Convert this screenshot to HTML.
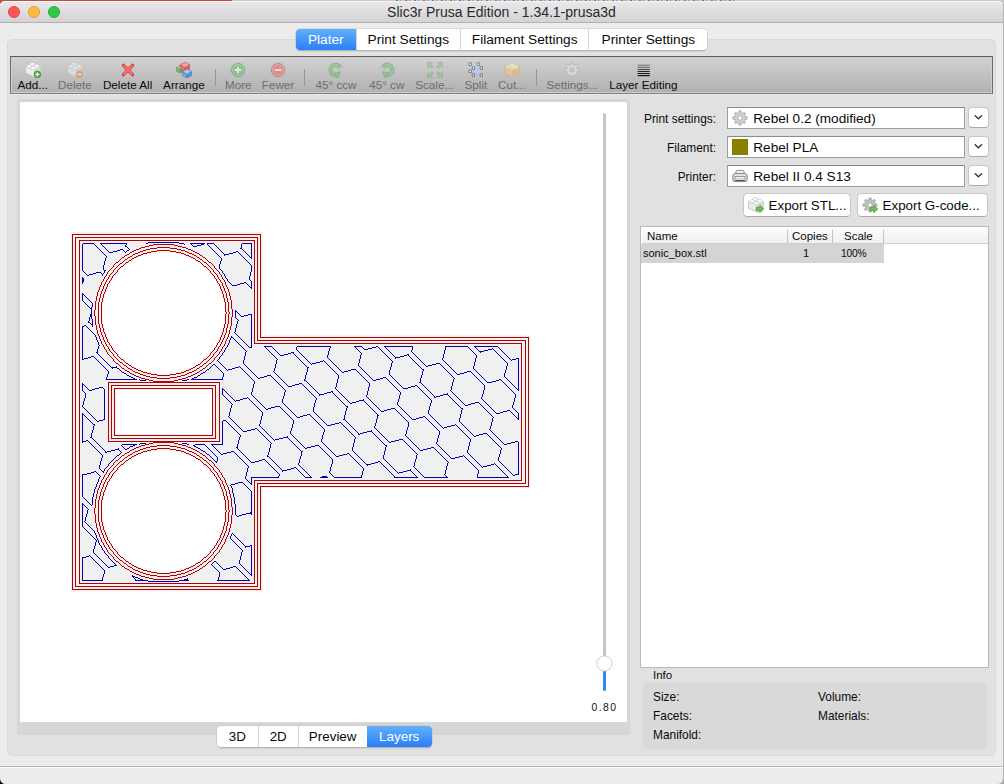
<!DOCTYPE html>
<html><head><meta charset="utf-8"><title>Slic3r Prusa Edition</title>
<style>
*{box-sizing:border-box;margin:0;padding:0}
html,body{width:1004px;height:784px;overflow:hidden;background:#b2b2b2;font-family:"Liberation Sans",sans-serif;font-size:13px;color:#222}
.abs{position:absolute}
#bg{position:absolute;left:0;top:0;width:1004px;height:6px;background:#c9c9c9}
#bgred{position:absolute;left:0;top:0;width:232px;height:6px;background:#b5553f}
#bgtxt{position:absolute;left:396px;top:0;width:340px;height:1px;background:repeating-linear-gradient(90deg,#6a6a6a 0 2px,#c9c9c9 2px 4px,#888 4px 5px,#c9c9c9 5px 9px);opacity:.8}
#win{position:absolute;left:0;top:0;width:1004px;height:784px;overflow:hidden}
#winbg{position:absolute;left:0;top:1px;width:1003px;height:783px;background:#ececec;border-radius:5px 5px 4px 4px}
#title{position:absolute;left:0;top:1px;width:1003px;height:22px;border-radius:5px 5px 0 0;background:linear-gradient(#eae8ea,#d4d2d4);border-bottom:1px solid #b3b1b3;box-shadow:inset 0 1px 0 #f5f4f5;text-align:center;line-height:23px;font-size:14px;color:#2a2a2a}
.tl{position:absolute;top:5px;width:12px;height:12px;border-radius:50%}
#tabbox{position:absolute;left:7px;top:39px;width:989px;height:716.5px;background:#e1e1e1;border:1px solid #dadada;border-radius:5px}
#tabs{position:absolute;left:296px;top:28.5px;height:21px;width:411.3px;border-radius:4px;background:#fff;box-shadow:0 0 0 0.5px #c4c4c4,0 1px 0.5px 0.2px #a8a8a8;overflow:hidden;font-size:13.7px}
#tabs div{position:absolute;top:0;height:21px;line-height:21px;text-align:center;color:#0a0a0a;border-left:1px solid #d6d6d6}
#tabs div.sel{background:linear-gradient(#62b0fa,#2a7ff6);color:#fff;border-left:none}
#toolbar{position:absolute;left:10px;top:56px;width:983px;height:38px;background:linear-gradient(#d2d2d2,#b0b0b0);border:1px solid #6e6e6e;border-top-color:#5c5c5c;border-bottom-color:#808080;box-shadow:inset 0 0 0 1px #cdcdcd,0 1px 0 #e9e9e9}
.tb{position:absolute;top:21px;font-size:11.7px;color:#0a0a0a;white-space:nowrap;transform:translateX(-50%)}
.tb.dis{color:#6e6e6e}
.sep{position:absolute;top:11.5px;width:1px;height:17px;background:#969696}
#panel{position:absolute;left:17px;top:99px;width:613px;height:636px;background:#d6d6d6;border-radius:4px}
#canvas{position:absolute;left:20px;top:102px;width:607px;height:620px;overflow:hidden;background:#fff}
#btabs{position:absolute;left:216.8px;top:726.3px;width:214.8px;height:20.4px;border-radius:4px;background:#fff;box-shadow:0 0 0 0.5px #c4c4c4,0 1px 0.5px 0.2px #a8a8a8;overflow:hidden;font-size:13.4px}
#btabs div{position:absolute;top:0;height:20.4px;line-height:21px;text-align:center;color:#0a0a0a;border-left:1px solid #d6d6d6}
#btabs div.sel{background:linear-gradient(#62b0fa,#2a7ff6);color:#fff;border-left:none}
.lbl{position:absolute;font-size:11.9px;color:#0a0a0a;white-space:nowrap}
.combo{position:absolute;left:727px;width:238px;height:22px;background:#fff;border:1px solid #9c9c9c;border-top-color:#8a8a8a;font-size:13.6px;line-height:21.6px;color:#0a0a0a;padding-left:25.3px;white-space:nowrap}
.cbtn{position:absolute;left:968.3px;width:20.4px;height:20.4px;background:#fff;border:1px solid #c6c6c6;border-bottom-color:#aaa;border-radius:4px}
.btn{position:absolute;top:192.5px;height:24px;background:#fff;border:1px solid #c6c6c6;border-bottom-color:#aaa;border-radius:4.5px;font-size:13.35px;line-height:23px;color:#0a0a0a;white-space:nowrap;padding-left:25px}
#list{position:absolute;left:640px;top:226px;width:349px;height:442px;background:#fff;border:1px solid #b8b8b8}
#status{position:absolute;left:0;top:766px;width:1004px;height:18px;background:#ececec;border-top:1px solid #b4b4b4;box-shadow:inset 0 1px 0 #fbfbfb}

.ic{position:absolute;top:5px;width:16px;height:16px}
.cic{position:absolute;left:3.5px;top:2px;width:16px;height:16px}
.bic{position:absolute;left:4px;top:3px;width:16px;height:16px}
#lhead{position:absolute;left:1px;top:1px;width:346px;height:16px;background:linear-gradient(#fcfcfc,#f0f0f0);border-bottom:1px solid #cfcfcf}
.lh{position:absolute;top:2.5px;font-size:11.5px;color:#0a0a0a}
.lsep{position:absolute;top:3px;width:1px;height:13px;background:#c4c4c4}
#lrow{position:absolute;left:0;top:17px;width:243px;height:19px;background:#d4d4d4}
.lr{position:absolute;top:20px;font-size:11px;color:#0a0a0a;white-space:nowrap}
#info{position:absolute;left:643px;top:682px;width:344px;height:67px;background:#d9d9d9;border-radius:4px}
#redge{position:absolute;left:1003px;top:4px;width:1px;height:776px;background:#b2b2b2}
</style></head><body>
<div id="bg"></div><div id="bgred"></div><div id="bgtxt"></div>
<div id="win">
<div id="winbg"></div>
<div id="title">Slic3r Prusa Edition - 1.34.1-prusa3d
 <div class="tl" style="left:8px;background:#fc5753;border:1px solid #df4744"></div>
 <div class="tl" style="left:28px;background:#fdbc40;border:1px solid #de9f34"></div>
 <div class="tl" style="left:48px;background:#33c748;border:1px solid #27aa35"></div>
</div>
<div id="tabbox"></div>
<div id="tabs">
 <div class="sel" style="left:0;width:59.6px">Plater</div>
 <div style="left:59.6px;width:104.4px">Print Settings</div>
 <div style="left:164px;width:128.4px">Filament Settings</div>
 <div style="left:292.4px;width:119px">Printer Settings</div>
</div>
<div id="toolbar">
<div class="tb" style="left:21.8px">Add...</div>
<div class="ic" style="left:13.8px"><svg width="16" height="16" viewBox="0 0 16 16"><path d="M0.4,4.8 L7,1.6 L15.7,4.6 L15.7,10.6 L9.5,15.4 L0.5,11.2Z" fill="#ececec" stroke="#b4b4b4" stroke-width="0.8" stroke-linejoin="round"/>
<path d="M0.4,4.8 L7,1.6 L15.7,4.6 L9.5,8.6Z" fill="#f8f8f8"/>
<path d="M9.5,8.6 L15.7,4.6 L15.7,10.6 L9.5,15.4Z" fill="#d8d8d8"/>
<path d="M0.4,4.8 L9.5,8.6 L15.7,4.6 M9.5,8.6V15.4" fill="none" stroke="#c8c8c8" stroke-width="0.5"/>
<g fill="#fdfdfd" stroke="#c0c0c0" stroke-width="0.6"><path d="M5.2,1.6 a2.1,1.2 0 0 1 4.2,0 v1 a2.1,1.2 0 0 1 -4.2,0z"/><path d="M2.2,3.8 a2.1,1.2 0 0 1 4.2,0 v1 a2.1,1.2 0 0 1 -4.2,0z"/><path d="M9.4,3.4 a2.1,1.2 0 0 1 4.2,0 v1 a2.1,1.2 0 0 1 -4.2,0z"/><path d="M6.2,5.6 a2.1,1.2 0 0 1 4.2,0 v1 a2.1,1.2 0 0 1 -4.2,0z"/></g><circle cx="12.4" cy="12.4" r="3.4" fill="#4caf3a" stroke="#2f8f22" stroke-width="0.6"/><path d="M10.4,12.4h4M12.4,10.4v4" stroke="#fff" stroke-width="1.3"/></svg></div>
<div class="tb dis" style="left:63.9px">Delete</div>
<div class="ic" style="left:55.9px"><svg width="16" height="16" viewBox="0 0 16 16" opacity="0.55"><path d="M0.4,4.8 L7,1.6 L15.7,4.6 L15.7,10.6 L9.5,15.4 L0.5,11.2Z" fill="#ececec" stroke="#b4b4b4" stroke-width="0.8" stroke-linejoin="round"/>
<path d="M0.4,4.8 L7,1.6 L15.7,4.6 L9.5,8.6Z" fill="#f8f8f8"/>
<path d="M9.5,8.6 L15.7,4.6 L15.7,10.6 L9.5,15.4Z" fill="#d8d8d8"/>
<path d="M0.4,4.8 L9.5,8.6 L15.7,4.6 M9.5,8.6V15.4" fill="none" stroke="#c8c8c8" stroke-width="0.5"/>
<g fill="#fdfdfd" stroke="#c0c0c0" stroke-width="0.6"><path d="M5.2,1.6 a2.1,1.2 0 0 1 4.2,0 v1 a2.1,1.2 0 0 1 -4.2,0z"/><path d="M2.2,3.8 a2.1,1.2 0 0 1 4.2,0 v1 a2.1,1.2 0 0 1 -4.2,0z"/><path d="M9.4,3.4 a2.1,1.2 0 0 1 4.2,0 v1 a2.1,1.2 0 0 1 -4.2,0z"/><path d="M6.2,5.6 a2.1,1.2 0 0 1 4.2,0 v1 a2.1,1.2 0 0 1 -4.2,0z"/></g><circle cx="12.4" cy="12.4" r="3.4" fill="#f09050" stroke="#d87030" stroke-width="0.6"/><path d="M10.4,12.4h4" stroke="#fff" stroke-width="1.3"/></svg></div>
<div class="tb" style="left:116.6px">Delete All</div>
<div class="ic" style="left:108.6px"><svg width="16" height="16" viewBox="0 0 16 16"><path d="M3.4,3.4 L12.6,12.6 M12.6,3.4 L3.4,12.6" stroke="#e8383d" stroke-width="3.4" stroke-linecap="round"/><path d="M3.8,3.8 L12.2,12.2 M12.2,3.8 L3.8,12.2" stroke="#f8787a" stroke-width="1.7" stroke-linecap="round"/></svg></div>
<div class="tb" style="left:172.9px">Arrange</div>
<div class="ic" style="left:164.9px"><svg width="16" height="16" viewBox="0 0 16 16"><path d="M0.30,5.67 L4.00,7.74 L4.00,11.00 L0.30,8.93Z" fill="#7cc474" stroke="#4e9a48" stroke-width="0.6" stroke-linejoin="round"/><path d="M4.00,7.74 L7.70,5.67 L7.70,8.93 L4.00,11.00Z" fill="#62b45a" stroke="#4e9a48" stroke-width="0.6" stroke-linejoin="round"/><path d="M0.30,5.67 L4.00,3.60 L7.70,5.67 L4.00,7.74Z" fill="#a8dca0" stroke="#4e9a48" stroke-width="0.6" stroke-linejoin="round"/><path d="M4.20,2.93 L8.90,5.56 L8.90,9.70 L4.20,7.07Z" fill="#ee7474" stroke="#c84848" stroke-width="0.6" stroke-linejoin="round"/><path d="M8.90,5.56 L13.60,2.93 L13.60,7.07 L8.90,9.70Z" fill="#e45c5c" stroke="#c84848" stroke-width="0.6" stroke-linejoin="round"/><path d="M4.20,2.93 L8.90,0.30 L13.60,2.93 L8.90,5.56Z" fill="#f8a4a4" stroke="#c84848" stroke-width="0.6" stroke-linejoin="round"/><path d="M6.40,9.58 L11.00,12.15 L11.00,16.20 L6.40,13.62Z" fill="#74a8e4" stroke="#4a7cc0" stroke-width="0.6" stroke-linejoin="round"/><path d="M11.00,12.15 L15.60,9.58 L15.60,13.62 L11.00,16.20Z" fill="#5c94d8" stroke="#4a7cc0" stroke-width="0.6" stroke-linejoin="round"/><path d="M6.40,9.58 L11.00,7.00 L15.60,9.58 L11.00,12.15Z" fill="#a4c8f0" stroke="#4a7cc0" stroke-width="0.6" stroke-linejoin="round"/></svg></div>
<div class="tb dis" style="left:227.3px">More</div>
<div class="ic" style="left:219.3px"><svg width="16" height="16" viewBox="0 0 16 16" opacity="0.55"><circle cx="8" cy="8" r="6.7" fill="#5cb85c" stroke="#3c9a3c" stroke-width="0.8"/><circle cx="8" cy="8" r="5.4" fill="none" stroke="#a8dca8" stroke-width="0.7"/><path d="M4.8,8h6.4M8,4.8v6.4" stroke="#fff" stroke-width="1.9"/></svg></div>
<div class="tb dis" style="left:267.0px">Fewer</div>
<div class="ic" style="left:259.0px"><svg width="16" height="16" viewBox="0 0 16 16" opacity="0.55"><circle cx="8" cy="8" r="6.7" fill="#e8645a" stroke="#c8483e" stroke-width="0.8"/><circle cx="8" cy="8" r="5.4" fill="none" stroke="#f4b0a8" stroke-width="0.7"/><path d="M4.8,8h6.4" stroke="#fff" stroke-width="1.9"/></svg></div>
<div class="tb dis" style="left:325.0px">45° ccw</div>
<div class="ic" style="left:317.0px"><svg width="16" height="16" viewBox="0 0 16 16" opacity="0.50"><g transform="translate(-0.5,0.5)"><path d="M12.6,5.2 A5,5 0 1,0 8.8,12.4" fill="none" stroke="#3c9a3c" stroke-width="4.2"/><path d="M12.6,5.2 A5,5 0 1,0 8.8,12.4" fill="none" stroke="#6cc46c" stroke-width="3"/><path d="M8.4,8.6 L13.4,12 L8.4,15.6Z" fill="#6cc46c" stroke="#3c9a3c" stroke-width="0.7" stroke-linejoin="round" transform="rotate(200 10 12)"/></g></svg></div>
<div class="tb dis" style="left:375.8px">45° cw</div>
<div class="ic" style="left:367.8px"><svg width="16" height="16" viewBox="0 0 16 16" opacity="0.50"><g transform="translate(16.5,0.5) scale(-1,1)"><path d="M12.6,5.2 A5,5 0 1,0 8.8,12.4" fill="none" stroke="#3c9a3c" stroke-width="4.2"/><path d="M12.6,5.2 A5,5 0 1,0 8.8,12.4" fill="none" stroke="#6cc46c" stroke-width="3"/><path d="M8.4,8.6 L13.4,12 L8.4,15.6Z" fill="#6cc46c" stroke="#3c9a3c" stroke-width="0.7" stroke-linejoin="round" transform="rotate(200 10 12)"/></g></svg></div>
<div class="tb dis" style="left:423.7px">Scale...</div>
<div class="ic" style="left:415.7px"><svg width="16" height="16" viewBox="0 0 16 16" opacity="0.42"><path d="M0.6,0.6h5l-1.6,1.6l2.4,2.4l-1.8,1.8l-2.4,-2.4l-1.6,1.6z" fill="#6cc46c" stroke="#3c9a3c" stroke-width="0.6" stroke-linejoin="round"/><g transform="translate(16,0) scale(-1,1)"><path d="M0.6,0.6h5l-1.6,1.6l2.4,2.4l-1.8,1.8l-2.4,-2.4l-1.6,1.6z" fill="#6cc46c" stroke="#3c9a3c" stroke-width="0.6" stroke-linejoin="round"/></g><g transform="translate(0,16) scale(1,-1)"><path d="M0.6,0.6h5l-1.6,1.6l2.4,2.4l-1.8,1.8l-2.4,-2.4l-1.6,1.6z" fill="#6cc46c" stroke="#3c9a3c" stroke-width="0.6" stroke-linejoin="round"/></g><g transform="translate(16,16) scale(-1,-1)"><path d="M0.6,0.6h5l-1.6,1.6l2.4,2.4l-1.8,1.8l-2.4,-2.4l-1.6,1.6z" fill="#6cc46c" stroke="#3c9a3c" stroke-width="0.6" stroke-linejoin="round"/></g></svg></div>
<div class="tb dis" style="left:464.9px">Split</div>
<div class="ic" style="left:456.9px"><svg width="16" height="16" viewBox="0 0 16 16" opacity="0.80"><rect x="2.2" y="2.2" width="8" height="7" fill="#c4d8f4" stroke="#a8c4ec" stroke-width="0.6"/><rect x="5.4" y="6" width="8" height="7" fill="#b4ccf0" stroke="#98b8e8" stroke-width="0.6"/><rect x="1.0" y="1.0" width="2.4" height="2.4" fill="#fff" stroke="#555" stroke-width="0.8"/><rect x="9.0" y="1.0" width="2.4" height="2.4" fill="#fff" stroke="#555" stroke-width="0.8"/><rect x="1.0" y="8.0" width="2.4" height="2.4" fill="#fff" stroke="#555" stroke-width="0.8"/><rect x="4.2" y="4.8" width="2.4" height="2.4" fill="#fff" stroke="#555" stroke-width="0.8"/><rect x="12.2" y="4.8" width="2.4" height="2.4" fill="#fff" stroke="#555" stroke-width="0.8"/><rect x="4.2" y="11.8" width="2.4" height="2.4" fill="#fff" stroke="#555" stroke-width="0.8"/><rect x="12.2" y="11.8" width="2.4" height="2.4" fill="#fff" stroke="#555" stroke-width="0.8"/></svg></div>
<div class="tb dis" style="left:501.0px">Cut...</div>
<div class="ic" style="left:493.0px"><svg width="16" height="16" viewBox="0 0 16 16" opacity="0.60"><path d="M8,0.8 L15.2,4.4 L15.2,11.6 L8,15.2 L0.8,11.6 L0.8,4.4Z" fill="#ecc880" stroke="#d8a850" stroke-width="0.8" stroke-linejoin="round"/><path d="M8,0.8 L15.2,4.4 L8,8 L0.8,4.4Z" fill="#f8e4b4"/><path d="M8,8 L15.2,4.4 L15.2,11.6 L8,15.2Z" fill="#e4b868"/><path d="M5.6,2 L12.6,5.6 L12.6,8" fill="none" stroke="#fff4d8" stroke-width="1.2"/></svg></div>
<div class="tb dis" style="left:561.4px">Settings...</div>
<div class="ic" style="left:553.4px"><svg width="16" height="16" viewBox="0 0 16 16" opacity="0.90"><path d="M15.11,6.87 L15.11,9.13 L13.06,9.21 L12.43,10.72 L13.82,12.23 L12.23,13.82 L10.72,12.43 L9.21,13.06 L9.13,15.11 L6.87,15.11 L6.79,13.06 L5.28,12.43 L3.77,13.82 L2.18,12.23 L3.57,10.72 L2.94,9.21 L0.89,9.13 L0.89,6.87 L2.94,6.79 L3.57,5.28 L2.18,3.77 L3.77,2.18 L5.28,3.57 L6.79,2.94 L6.87,0.89 L9.13,0.89 L9.21,2.94 L10.72,3.57 L12.23,2.18 L13.82,3.77 L12.43,5.28 L13.06,6.79Z M5.80,8.00 a2.20,2.20 0 1,0 4.40,0 a2.20,2.20 0 1,0 -4.40,0Z" fill="#dadada" stroke="#adadad" stroke-width="0.6" fill-rule="evenodd" stroke-linejoin="round"/></svg></div>
<div class="tb" style="left:632.4px">Layer Editing</div>
<div class="ic" style="left:624.4px"><svg width="16" height="16" viewBox="0 0 16 16"><g stroke="#111"><path d="M2.6,3.2h12.2" stroke-width="0.6" opacity="0.75"/><path d="M2.6,5.3h12.2" stroke-width="0.7" opacity="0.8"/><path d="M2.6,7.5h12.2" stroke-width="0.8" opacity="0.9"/><path d="M2.6,9.5h12.2" stroke-width="0.9"/><path d="M2.6,11.5h12.2" stroke-width="1"/><path d="M2.6,13.6h12.2" stroke-width="1.15"/></g></svg></div>
<div class="sep" style="left:204px"></div>
<div class="sep" style="left:293px"></div>
<div class="sep" style="left:525px"></div>
</div>
<div id="panel"></div>
<div id="canvas"><svg width="608" height="620" viewBox="0 0 608 620" style="position:absolute;left:0;top:0">
<path fill="#f0f0f0" d="M51.00,130.00 L243.00,130.00 L243.00,233.60 L509.70,233.60 L509.70,386.20 L243.00,386.20 L243.00,489.60 L51.00,489.60Z"/>
<circle cx="143.75" cy="211.00" r="60.8" fill="#fff"/>
<circle cx="143.75" cy="409.00" r="60.8" fill="#fff"/>
<rect x="96.00" y="287.80" width="96.00" height="44.40" fill="#fff"/>
<path shape-rendering="crispEdges" fill="#0000b3" d="M62,142v27h1v-27zM62,175v1h1v-1zM62,180v2h1v-2zM62,191v1h1v-1zM62,193v6h1v-6zM62,225v32h1v-32zM62,281v1h1v-1zM62,283v6h1v-6zM62,303v2h1v-2zM62,311v1h1v-1zM62,313v26h1v-26zM62,340v1h1v-1zM62,373v22h1v-22zM62,401v1h1v-1zM62,403v22h1v-22zM62,456v22h1v-22zM63,169v1h1v-1zM63,199v1h1v-1zM63,289v1h1v-1zM63,299v4h1v-4zM63,305v1h1v-1zM63,395v1h1v-1zM63,425v1h1v-1zM64,170v1h1v-1zM64,193v1h1v-1zM64,200v1h1v-1zM64,283v1h1v-1zM64,290v1h1v-1zM64,296v3h1v-3zM64,306v1h1v-1zM64,313v1h1v-1zM64,396v1h1v-1zM64,403v1h1v-1zM64,419v1h1v-1zM64,426v1h1v-1zM65,171v1h1v-1zM65,194v1h1v-1zM65,201v1h1v-1zM65,284v1h1v-1zM65,291v5h1v-5zM65,307v1h1v-1zM65,314v1h1v-1zM65,397v1h1v-1zM65,404v1h1v-1zM65,415v4h1v-4zM65,420v1h1v-1zM65,427v1h1v-1zM66,172v1h1v-1zM66,195v1h1v-1zM66,202v1h1v-1zM66,224v1h1v-1zM66,285v1h1v-1zM66,308v1h1v-1zM66,315v1h1v-1zM66,398v1h1v-1zM66,405v1h1v-1zM66,412v3h1v-3zM66,421v1h1v-1zM66,428v1h1v-1zM67,196v1h1v-1zM67,203v1h1v-1zM67,225v1h1v-1zM67,286v1h1v-1zM67,309v1h1v-1zM67,316v1h1v-1zM67,399v1h1v-1zM67,406v1h1v-1zM67,408v4h1v-4zM67,422v1h1v-1zM67,429v1h1v-1zM68,197v1h1v-1zM68,204v1h1v-1zM68,219v1h1v-1zM68,226v1h1v-1zM68,287v1h1v-1zM68,310v1h1v-1zM68,317v1h1v-1zM68,339v1h1v-1zM68,400v1h1v-1zM68,407v1h1v-1zM68,423v1h1v-1zM68,430v1h1v-1zM69,198v1h1v-1zM69,205v1h1v-1zM69,215v4h1v-4zM69,227v1h1v-1zM69,311v1h1v-1zM69,318v1h1v-1zM69,340v1h1v-1zM69,401v1h1v-1zM69,424v1h1v-1zM69,431v1h1v-1zM69,453v1h1v-1zM70,199v1h1v-1zM70,221v1h1v-1zM70,228v1h1v-1zM70,312v1h1v-1zM70,319v1h1v-1zM70,341v1h1v-1zM70,402v1h1v-1zM70,425v1h1v-1zM70,432v1h1v-1zM70,454v1h1v-1zM71,200v1h1v-1zM71,205v1h1v-1zM71,207v5h1v-5zM71,215v2h1v-2zM71,229v1h1v-1zM71,313v1h1v-1zM71,320v1h1v-1zM71,331v4h1v-4zM71,342v1h1v-1zM71,403v1h1v-1zM71,426v1h1v-1zM71,433v1h1v-1zM71,455v1h1v-1zM72,201v4h1v-4zM72,217v5h1v-5zM72,223v2h1v-2zM72,230v1h1v-1zM72,314v1h1v-1zM72,321v1h1v-1zM72,328v3h1v-3zM72,336v1h1v-1zM72,343v1h1v-1zM72,395v8h1v-8zM72,427v1h1v-1zM72,434v1h1v-1zM72,456v1h1v-1zM73,231v1h1v-1zM73,315v1h1v-1zM73,324v4h1v-4zM73,337v1h1v-1zM73,344v1h1v-1zM73,391v4h1v-4zM73,428v1h1v-1zM73,435v1h1v-1zM73,447v4h1v-4zM73,457v1h1v-1zM74,142v1h1v-1zM74,232v1h1v-1zM74,255v1h1v-1zM74,316v1h1v-1zM74,323v1h1v-1zM74,338v1h1v-1zM74,345v1h1v-1zM74,387v4h1v-4zM74,429v2h1v-2zM74,436v1h1v-1zM74,444v3h1v-3zM74,451v1h1v-1zM74,458v1h1v-1zM75,143v1h1v-1zM75,233v2h1v-2zM75,256v1h1v-1zM75,317v1h1v-1zM75,339v1h1v-1zM75,346v1h1v-1zM75,385v2h1v-2zM75,431v2h1v-2zM75,437v1h1v-1zM75,440v4h1v-4zM75,452v1h1v-1zM75,459v1h1v-1zM76,144v1h1v-1zM76,235v3h1v-3zM76,257v1h1v-1zM76,318v1h1v-1zM76,340v1h1v-1zM76,347v1h1v-1zM76,370v1h1v-1zM76,382v3h1v-3zM76,433v3h1v-3zM76,438v2h1v-2zM76,453v1h1v-1zM76,460v1h1v-1zM77,145v1h1v-1zM77,238v2h1v-2zM77,247v3h1v-3zM77,251v1h1v-1zM77,258v1h1v-1zM77,341v1h1v-1zM77,348v1h1v-1zM77,371v1h1v-1zM77,380v2h1v-2zM77,436v2h1v-2zM77,454v1h1v-1zM77,461v1h1v-1zM78,146v1h1v-1zM78,240v3h1v-3zM78,244v3h1v-3zM78,252v1h1v-1zM78,259v1h1v-1zM78,342v1h1v-1zM78,349v1h1v-1zM78,372v1h1v-1zM78,377v3h1v-3zM78,438v3h1v-3zM78,455v1h1v-1zM78,462v1h1v-1zM79,147v1h1v-1zM79,243v1h1v-1zM79,253v1h1v-1zM79,260v1h1v-1zM79,343v1h1v-1zM79,350v1h1v-1zM79,363v4h1v-4zM79,373v1h1v-1zM79,375v2h1v-2zM79,441v2h1v-2zM79,456v1h1v-1zM79,463v1h1v-1zM80,148v1h1v-1zM80,254v1h1v-1zM80,261v1h1v-1zM80,344v1h1v-1zM80,351v1h1v-1zM80,359v4h1v-4zM80,367v1h1v-1zM80,374v1h1v-1zM80,443v1h1v-1zM80,457v1h1v-1zM80,464v1h1v-1zM81,142v1h1v-1zM81,149v1h1v-1zM81,171v1h1v-1zM81,255v1h1v-1zM81,262v1h1v-1zM81,345v1h1v-1zM81,352v1h1v-1zM81,356v3h1v-3zM81,368v1h1v-1zM81,444v2h1v-2zM81,458v1h1v-1zM81,465v1h1v-1zM82,143v1h1v-1zM82,150v1h1v-1zM82,172v2h1v-2zM82,256v1h1v-1zM82,263v1h1v-1zM82,346v1h1v-1zM82,353v3h1v-3zM82,446v2h1v-2zM82,459v1h1v-1zM82,466v1h1v-1zM82,475v3h1v-3zM83,144v1h1v-1zM83,151v1h1v-1zM83,163v5h1v-5zM83,171v1h1v-1zM83,257v1h1v-1zM83,264v1h1v-1zM83,286v1h1v-1zM83,347v1h1v-1zM83,370v1h1v-1zM83,448v1h1v-1zM83,460v1h1v-1zM83,467v1h1v-1zM83,472v3h1v-3zM84,145v1h1v-1zM84,152v1h1v-1zM84,159v4h1v-4zM84,169v2h1v-2zM84,258v1h1v-1zM84,265v1h1v-1zM84,287v30h1v-30zM84,348v1h1v-1zM84,367v2h1v-2zM84,449v2h1v-2zM84,461v1h1v-1zM84,468v4h1v-4zM85,146v1h1v-1zM85,153v1h1v-1zM85,156v3h1v-3zM85,259v1h1v-1zM85,266v1h1v-1zM85,349v1h1v-1zM85,366v1h1v-1zM85,451v1h1v-1zM85,462v1h1v-1zM86,147v1h1v-1zM86,154v2h1v-2zM86,260v1h1v-1zM86,267v1h1v-1zM86,275v2h1v-2zM86,365v1h1v-1zM86,452v1h1v-1zM86,463v1h1v-1zM87,148v1h1v-1zM87,261v1h1v-1zM87,268v1h1v-1zM87,272v3h1v-3zM87,364v1h1v-1zM87,453v1h1v-1zM87,464v1h1v-1zM88,149v1h1v-1zM88,262v1h1v-1zM88,269v3h1v-3zM88,362v2h1v-2zM88,454v2h1v-2zM89,263v1h1v-1zM89,361v1h1v-1zM89,456v1h1v-1zM90,264v1h1v-1zM90,360v1h1v-1zM90,457v1h1v-1zM91,359v1h1v-1zM91,458v1h1v-1zM92,266v1h1v-1zM92,358v1h1v-1zM92,459v1h1v-1zM93,357v1h1v-1zM93,460v1h1v-1zM94,356v1h1v-1zM94,461v1h1v-1zM95,355v1h1v-1zM95,462v1h1v-1zM96,264v1h1v-1zM96,354v1h1v-1zM98,346v1h1v-1zM99,267v1h1v-1zM99,348v1h1v-1zM99,352v1h1v-1zM100,268v1h1v-1zM100,349v1h1v-1zM100,351v1h1v-1zM101,269v1h1v-1zM101,343v1h1v-1zM101,350v1h1v-1zM102,344v1h1v-1zM103,148v1h1v-1zM103,345v1h1v-1zM104,149v1h1v-1zM104,346v1h1v-1zM105,143v1h1v-1zM105,150v1h1v-1zM106,142v1h1v-1zM106,149v1h1v-1zM106,272v1h1v-1zM107,145v1h1v-1zM108,146v1h1v-1zM109,147v1h1v-1zM109,345v1h1v-1zM112,473v1h1v-1zM113,475v1h1v-1zM114,476v1h1v-1zM115,477v1h1v-1zM119,277v1h1v-1zM119,342v1h1v-1zM164,142v1h1v-1zM167,476v1h1v-1zM171,142v1h1v-1zM172,143v1h1v-1zM177,274v1h1v-1zM180,272v1h1v-1zM180,347v1h1v-1zM185,269v1h1v-1zM185,343v1h1v-1zM185,350v1h1v-1zM186,268v1h1v-1zM186,344v1h1v-1zM186,351v1h1v-1zM187,142v1h1v-1zM187,345v1h1v-1zM188,143v1h1v-1zM188,346v1h1v-1zM189,144v1h1v-1zM189,266v1h1v-1zM189,347v1h1v-1zM189,353v1h1v-1zM190,145v1h1v-1zM190,265v1h1v-1zM190,348v1h1v-1zM190,354v1h1v-1zM191,146v1h1v-1zM191,264v1h1v-1zM191,349v1h1v-1zM191,355v1h1v-1zM191,462v1h1v-1zM192,147v1h1v-1zM192,263v1h1v-1zM192,343v1h1v-1zM192,350v1h1v-1zM192,356v1h1v-1zM192,461v1h1v-1zM192,463v1h1v-1zM193,148v1h1v-1zM193,344v1h1v-1zM193,351v1h1v-1zM193,357v1h1v-1zM193,460v1h1v-1zM193,464v1h1v-1zM194,142v1h1v-1zM194,149v1h1v-1zM194,345v1h1v-1zM194,352v1h1v-1zM194,358v1h1v-1zM194,465v1h1v-1zM195,143v1h1v-1zM195,150v1h1v-1zM195,263v1h1v-1zM195,346v1h1v-1zM195,353v1h1v-1zM195,466v1h1v-1zM196,144v1h1v-1zM196,151v1h1v-1zM196,264v1h1v-1zM196,347v1h1v-1zM196,354v1h1v-1zM196,360v1h1v-1zM196,460v1h1v-1zM196,467v1h1v-1zM197,145v1h1v-1zM197,152v1h1v-1zM197,258v1h1v-1zM197,265v1h1v-1zM197,348v1h1v-1zM197,355v4h1v-4zM197,461v1h1v-1zM197,468v1h1v-1zM198,146v1h1v-1zM198,153v1h1v-1zM198,257v1h1v-1zM198,259v1h1v-1zM198,266v1h1v-1zM198,349v1h1v-1zM198,462v1h1v-1zM198,469v1h1v-1zM198,475v3h1v-3zM199,147v1h1v-1zM199,154v1h1v-1zM199,162v5h1v-5zM199,255v2h1v-2zM199,260v1h1v-1zM199,267v1h1v-1zM199,350v1h1v-1zM199,463v1h1v-1zM199,470v5h1v-5zM200,148v1h1v-1zM200,155v1h1v-1zM200,159v3h1v-3zM200,167v1h1v-1zM200,254v1h1v-1zM200,261v1h1v-1zM200,268v1h1v-1zM200,351v1h1v-1zM200,464v1h1v-1zM201,149v1h1v-1zM201,156v3h1v-3zM201,168v1h1v-1zM201,253v1h1v-1zM201,262v1h1v-1zM201,269v1h1v-1zM201,465v1h1v-1zM202,150v1h1v-1zM202,169v2h1v-2zM202,251v2h1v-2zM202,263v1h1v-1zM202,270v1h1v-1zM202,275v2h1v-2zM202,286v1h1v-1zM202,288v5h1v-5zM202,319v23h1v-23zM202,466v1h1v-1zM203,151v1h1v-1zM203,171v1h1v-1zM203,250v1h1v-1zM203,264v1h1v-1zM203,271v4h1v-4zM203,293v1h1v-1zM204,153v1h1v-1zM204,172v2h1v-2zM204,248v2h1v-2zM204,265v1h1v-1zM204,288v1h1v-1zM204,294v1h1v-1zM205,174v2h1v-2zM205,246v2h1v-2zM205,266v1h1v-1zM205,289v1h1v-1zM205,295v1h1v-1zM206,176v1h1v-1zM206,245v1h1v-1zM206,267v1h1v-1zM206,290v1h1v-1zM206,296v1h1v-1zM206,319v1h1v-1zM207,177v2h1v-2zM207,243v2h1v-2zM207,268v1h1v-1zM207,291v1h1v-1zM207,297v1h1v-1zM207,320v1h1v-1zM208,179v1h1v-1zM208,241v2h1v-2zM208,292v1h1v-1zM208,298v1h1v-1zM208,314v1h1v-1zM208,321v1h1v-1zM209,180v1h1v-1zM209,238v3h1v-3zM209,293v1h1v-1zM209,299v1h1v-1zM209,310v4h1v-4zM209,315v1h1v-1zM209,322v1h1v-1zM210,181v1h1v-1zM210,236v2h1v-2zM210,294v1h1v-1zM210,300v1h1v-1zM210,306v4h1v-4zM210,316v1h1v-1zM210,323v1h1v-1zM210,383v1h1v-1zM210,434v3h1v-3zM211,182v1h1v-1zM211,234v1h1v-1zM211,295v1h1v-1zM211,301v1h1v-1zM211,303v3h1v-3zM211,317v1h1v-1zM211,324v1h1v-1zM211,384v2h1v-2zM211,432v2h1v-2zM211,437v1h1v-1zM212,296v1h1v-1zM212,302v1h1v-1zM212,318v1h1v-1zM212,325v1h1v-1zM212,386v5h1v-5zM212,431v1h1v-1zM212,438v1h1v-1zM213,236v1h1v-1zM213,297v1h1v-1zM213,319v1h1v-1zM213,326v1h1v-1zM213,391v4h1v-4zM213,432v1h1v-1zM213,439v1h1v-1zM214,230v1h1v-1zM214,237v1h1v-1zM214,298v1h1v-1zM214,320v1h1v-1zM214,327v1h1v-1zM214,350v1h1v-1zM214,395v7h1v-7zM214,433v1h1v-1zM214,440v1h1v-1zM215,208v1h1v-1zM215,210v6h1v-6zM215,226v4h1v-4zM215,231v1h1v-1zM215,238v1h1v-1zM215,299v1h1v-1zM215,321v1h1v-1zM215,328v1h1v-1zM215,351v1h1v-1zM215,402v11h1v-11zM215,434v1h1v-1zM215,441v1h1v-1zM216,216v1h1v-1zM216,222v4h1v-4zM216,232v1h1v-1zM216,239v1h1v-1zM216,322v1h1v-1zM216,329v1h1v-1zM216,352v1h1v-1zM216,413v1h1v-1zM216,435v1h1v-1zM216,442v1h1v-1zM216,465v1h1v-1zM217,210v1h1v-1zM217,217v1h1v-1zM217,219v3h1v-3zM217,233v1h1v-1zM217,240v1h1v-1zM217,323v1h1v-1zM217,330v1h1v-1zM217,342v3h1v-3zM217,346v1h1v-1zM217,353v1h1v-1zM217,436v1h1v-1zM217,443v1h1v-1zM217,466v1h1v-1zM218,150v1h1v-1zM218,211v1h1v-1zM218,218v1h1v-1zM218,234v1h1v-1zM218,241v1h1v-1zM218,324v1h1v-1zM218,331v1h1v-1zM218,338v4h1v-4zM218,347v1h1v-1zM218,354v1h1v-1zM218,437v1h1v-1zM218,444v1h1v-1zM218,467v1h1v-1zM219,151v1h1v-1zM219,212v1h1v-1zM219,235v1h1v-1zM219,242v1h1v-1zM219,264v1h1v-1zM219,325v1h1v-1zM219,332v1h1v-1zM219,335v3h1v-3zM219,348v1h1v-1zM219,355v1h1v-1zM219,438v1h1v-1zM219,445v1h1v-1zM219,458v4h1v-4zM219,468v1h1v-1zM220,152v1h1v-1zM220,213v1h1v-1zM220,236v1h1v-1zM220,243v1h1v-1zM220,265v1h1v-1zM220,326v1h1v-1zM220,333v2h1v-2zM220,349v1h1v-1zM220,356v1h1v-1zM220,439v1h1v-1zM220,446v1h1v-1zM220,454v4h1v-4zM220,462v1h1v-1zM220,469v1h1v-1zM221,142v4h1v-4zM221,153v1h1v-1zM221,237v1h1v-1zM221,244v1h1v-1zM221,266v1h1v-1zM221,327v1h1v-1zM221,350v1h1v-1zM221,357v1h1v-1zM221,440v1h1v-1zM221,447v1h1v-1zM221,450v4h1v-4zM221,463v1h1v-1zM221,470v1h1v-1zM222,147v1h1v-1zM222,154v1h1v-1zM222,238v1h1v-1zM222,245v1h1v-1zM222,267v1h1v-1zM222,328v1h1v-1zM222,351v1h1v-1zM222,358v1h1v-1zM222,441v1h1v-1zM222,448v2h1v-2zM222,464v1h1v-1zM222,471v1h1v-1zM223,148v1h1v-1zM223,155v1h1v-1zM223,239v1h1v-1zM223,246v1h1v-1zM223,258v4h1v-4zM223,268v1h1v-1zM223,352v1h1v-1zM223,359v1h1v-1zM223,381v1h1v-1zM223,442v1h1v-1zM223,465v1h1v-1zM223,472v1h1v-1zM224,149v1h1v-1zM224,156v1h1v-1zM224,240v1h1v-1zM224,247v1h1v-1zM224,254v4h1v-4zM224,262v1h1v-1zM224,269v1h1v-1zM224,353v1h1v-1zM224,360v1h1v-1zM224,382v1h1v-1zM224,443v1h1v-1zM224,466v1h1v-1zM224,473v1h1v-1zM225,150v1h1v-1zM225,157v1h1v-1zM225,241v1h1v-1zM225,248v1h1v-1zM225,250v4h1v-4zM225,263v1h1v-1zM225,270v1h1v-1zM225,354v1h1v-1zM225,361v1h1v-1zM225,374v3h1v-3zM225,383v1h1v-1zM225,445v1h1v-1zM225,467v1h1v-1zM225,474v1h1v-1zM226,151v1h1v-1zM226,158v1h1v-1zM226,181v1h1v-1zM226,242v1h1v-1zM226,249v1h1v-1zM226,264v1h1v-1zM226,271v1h1v-1zM226,355v1h1v-1zM226,362v1h1v-1zM226,370v4h1v-4zM226,377v1h1v-1zM226,384v1h1v-1zM226,468v1h1v-1zM226,475v1h1v-1zM227,152v1h1v-1zM227,159v1h1v-1zM227,182v1h1v-1zM227,243v1h1v-1zM227,265v1h1v-1zM227,272v1h1v-1zM227,295v1h1v-1zM227,356v1h1v-1zM227,363v1h1v-1zM227,366v4h1v-4zM227,378v1h1v-1zM227,385v1h1v-1zM227,469v1h1v-1zM227,476v1h1v-1zM228,153v1h1v-1zM228,160v1h1v-1zM228,183v1h1v-1zM228,244v1h1v-1zM228,266v1h1v-1zM228,273v1h1v-1zM228,296v1h1v-1zM228,357v1h1v-1zM228,364v2h1v-2zM228,379v1h1v-1zM228,386v1h1v-1zM228,470v1h1v-1zM228,477v1h1v-1zM229,154v1h1v-1zM229,161v1h1v-1zM229,174v4h1v-4zM229,184v1h1v-1zM229,267v1h1v-1zM229,274v1h1v-1zM229,297v1h1v-1zM229,358v1h1v-1zM229,380v1h1v-1zM229,387v1h1v-1zM229,471v1h1v-1zM230,162v1h1v-1zM230,170v4h1v-4zM230,178v1h1v-1zM230,268v1h1v-1zM230,275v1h1v-1zM230,298v1h1v-1zM230,359v1h1v-1zM230,388v1h1v-1zM231,142v13h1v-13zM231,156v1h1v-1zM231,163v7h1v-7zM231,179v6h1v-6zM231,186v1h1v-1zM231,213v32h1v-32zM231,269v1h1v-1zM231,276v1h1v-1zM231,290v3h1v-3zM231,299v1h1v-1zM231,376v5h1v-5zM231,382v1h1v-1zM231,389v21h1v-21zM231,412v1h1v-1zM231,444v28h1v-28zM231,473v1h1v-1zM232,270v1h1v-1zM232,277v1h1v-1zM232,286v4h1v-4zM232,293v1h1v-1zM232,300v1h1v-1zM233,271v1h1v-1zM233,278v1h1v-1zM233,282v4h1v-4zM233,294v1h1v-1zM233,301v1h1v-1zM234,272v1h1v-1zM234,279v3h1v-3zM234,295v1h1v-1zM234,302v1h1v-1zM235,273v1h1v-1zM235,296v1h1v-1zM235,303v1h1v-1zM236,274v1h1v-1zM236,297v1h1v-1zM236,304v1h1v-1zM237,275v1h1v-1zM237,298v1h1v-1zM237,305v1h1v-1zM237,327v1h1v-1zM238,299v1h1v-1zM238,306v1h1v-1zM238,328v1h1v-1zM239,300v1h1v-1zM239,307v1h1v-1zM239,322v2h1v-2zM239,329v1h1v-1zM240,301v1h1v-1zM240,308v1h1v-1zM240,318v4h1v-4zM240,324v1h1v-1zM240,330v1h1v-1zM241,302v1h1v-1zM241,309v1h1v-1zM241,314v4h1v-4zM241,325v1h1v-1zM241,331v1h1v-1zM242,303v1h1v-1zM242,310v4h1v-4zM242,326v1h1v-1zM242,332v1h1v-1zM243,304v1h1v-1zM243,327v1h1v-1zM243,333v1h1v-1zM244,305v1h1v-1zM244,328v1h1v-1zM244,334v1h1v-1zM245,245v1h1v-1zM245,306v1h1v-1zM245,329v1h1v-1zM245,335v1h1v-1zM245,358v1h1v-1zM246,246v1h1v-1zM246,330v1h1v-1zM246,336v1h1v-1zM246,359v1h1v-1zM247,247v1h1v-1zM247,331v1h1v-1zM247,337v1h1v-1zM247,353v1h1v-1zM247,360v1h1v-1zM248,248v1h1v-1zM248,332v1h1v-1zM248,338v1h1v-1zM248,350v3h1v-3zM248,361v1h1v-1zM249,249v1h1v-1zM249,333v1h1v-1zM249,339v1h1v-1zM249,346v4h1v-4zM249,355v1h1v-1zM249,362v1h1v-1zM250,250v1h1v-1zM250,334v1h1v-1zM250,340v1h1v-1zM250,342v4h1v-4zM250,356v1h1v-1zM250,363v1h1v-1zM251,251v1h1v-1zM251,274v1h1v-1zM251,335v1h1v-1zM251,341v1h1v-1zM251,357v1h1v-1zM251,364v1h1v-1zM252,245v1h1v-1zM252,252v1h1v-1zM252,275v1h1v-1zM252,336v1h1v-1zM252,358v1h1v-1zM252,365v1h1v-1zM253,246v1h1v-1zM253,253v1h1v-1zM253,269v1h1v-1zM253,276v1h1v-1zM253,337v1h1v-1zM253,359v1h1v-1zM253,366v1h1v-1zM254,247v1h1v-1zM254,254v1h1v-1zM254,266v3h1v-3zM254,270v1h1v-1zM254,277v1h1v-1zM254,338v1h1v-1zM254,360v1h1v-1zM254,367v1h1v-1zM255,248v1h1v-1zM255,255v1h1v-1zM255,262v4h1v-4zM255,271v1h1v-1zM255,278v1h1v-1zM255,361v1h1v-1zM255,368v1h1v-1zM256,249v1h1v-1zM256,256v1h1v-1zM256,258v4h1v-4zM256,272v1h1v-1zM256,279v1h1v-1zM256,362v1h1v-1zM256,369v1h1v-1zM257,250v1h1v-1zM257,257v1h1v-1zM257,273v1h1v-1zM257,280v1h1v-1zM257,363v1h1v-1zM257,370v1h1v-1zM258,251v1h1v-1zM258,274v1h1v-1zM258,281v1h1v-1zM258,364v1h1v-1zM258,371v1h1v-1zM258,374v1h1v-1zM259,252v1h1v-1zM259,275v1h1v-1zM259,282v1h1v-1zM259,365v1h1v-1zM259,372v2h1v-2zM260,276v1h1v-1zM260,283v1h1v-1zM260,305v1h1v-1zM260,366v1h1v-1zM261,277v1h1v-1zM261,284v1h1v-1zM261,306v1h1v-1zM261,367v1h1v-1zM262,278v1h1v-1zM262,285v1h1v-1zM262,297v4h1v-4zM262,307v1h1v-1zM262,369v1h1v-1zM263,279v1h1v-1zM263,286v1h1v-1zM263,294v3h1v-3zM263,301v1h1v-1zM263,308v1h1v-1zM264,280v1h1v-1zM264,287v1h1v-1zM264,290v4h1v-4zM264,302v1h1v-1zM264,309v1h1v-1zM265,281v1h1v-1zM265,288v2h1v-2zM265,303v1h1v-1zM265,310v1h1v-1zM266,282v1h1v-1zM266,304v1h1v-1zM266,311v1h1v-1zM267,283v1h1v-1zM267,305v1h1v-1zM267,312v1h1v-1zM267,334v1h1v-1zM268,306v1h1v-1zM268,313v1h1v-1zM268,336v1h1v-1zM269,307v1h1v-1zM269,314v1h1v-1zM269,337v1h1v-1zM270,308v1h1v-1zM270,315v1h1v-1zM270,329v3h1v-3zM270,338v1h1v-1zM271,309v1h1v-1zM271,316v1h1v-1zM271,326v3h1v-3zM271,332v1h1v-1zM271,339v1h1v-1zM272,310v1h1v-1zM272,317v1h1v-1zM272,322v4h1v-4zM272,333v1h1v-1zM272,340v1h1v-1zM273,251v1h1v-1zM273,311v1h1v-1zM273,318v4h1v-4zM273,334v1h1v-1zM273,341v1h1v-1zM274,252v1h1v-1zM274,312v1h1v-1zM274,335v1h1v-1zM274,342v1h1v-1zM275,253v1h1v-1zM275,313v1h1v-1zM275,336v1h1v-1zM275,343v1h1v-1zM276,245v3h1v-3zM276,254v1h1v-1zM276,314v1h1v-1zM276,337v1h1v-1zM276,344v1h1v-1zM276,366v1h1v-1zM277,248v1h1v-1zM277,255v1h1v-1zM277,338v1h1v-1zM277,345v1h1v-1zM277,367v1h1v-1zM278,249v1h1v-1zM278,256v1h1v-1zM278,339v1h1v-1zM278,346v1h1v-1zM278,361v2h1v-2zM278,368v1h1v-1zM279,250v1h1v-1zM279,257v1h1v-1zM279,340v1h1v-1zM279,347v1h1v-1zM279,357v4h1v-4zM279,363v1h1v-1zM279,369v1h1v-1zM280,251v1h1v-1zM280,258v1h1v-1zM280,341v1h1v-1zM280,348v1h1v-1zM280,354v3h1v-3zM280,364v1h1v-1zM280,370v1h1v-1zM281,252v1h1v-1zM281,259v1h1v-1zM281,342v1h1v-1zM281,350v4h1v-4zM281,365v1h1v-1zM281,371v1h1v-1zM282,253v1h1v-1zM282,260v1h1v-1zM282,282v1h1v-1zM282,343v1h1v-1zM282,366v1h1v-1zM282,372v1h1v-1zM283,254v1h1v-1zM283,261v1h1v-1zM283,283v1h1v-1zM283,344v1h1v-1zM283,367v1h1v-1zM283,373v1h1v-1zM284,255v1h1v-1zM284,262v1h1v-1zM284,277v1h1v-1zM284,284v1h1v-1zM284,345v1h1v-1zM284,368v1h1v-1zM284,374v1h1v-1zM285,256v1h1v-1zM285,263v1h1v-1zM285,273v4h1v-4zM285,285v1h1v-1zM285,369v1h1v-1zM286,257v1h1v-1zM286,264v1h1v-1zM286,270v3h1v-3zM286,279v1h1v-1zM286,286v1h1v-1zM286,370v1h1v-1zM287,258v1h1v-1zM287,266v4h1v-4zM287,280v1h1v-1zM287,287v1h1v-1zM287,371v1h1v-1zM288,259v1h1v-1zM288,281v1h1v-1zM288,288v1h1v-1zM288,372v1h1v-1zM289,260v1h1v-1zM289,282v1h1v-1zM289,289v1h1v-1zM289,373v1h1v-1zM290,261v1h1v-1zM290,283v1h1v-1zM290,290v1h1v-1zM290,313v1h1v-1zM290,374v1h1v-1zM291,262v1h1v-1zM291,284v1h1v-1zM291,291v1h1v-1zM291,314v1h1v-1zM292,285v1h1v-1zM292,292v1h1v-1zM292,315v1h1v-1zM293,286v1h1v-1zM293,293v1h1v-1zM293,305v5h1v-5zM293,316v1h1v-1zM294,287v1h1v-1zM294,294v1h1v-1zM294,301v4h1v-4zM294,310v1h1v-1zM294,317v1h1v-1zM295,288v1h1v-1zM295,295v1h1v-1zM295,298v3h1v-3zM295,311v1h1v-1zM295,318v1h1v-1zM296,289v1h1v-1zM296,296v2h1v-2zM296,312v1h1v-1zM296,319v1h1v-1zM297,290v1h1v-1zM297,313v1h1v-1zM297,320v1h1v-1zM298,291v1h1v-1zM298,314v1h1v-1zM298,321v1h1v-1zM299,293v1h1v-1zM299,315v1h1v-1zM299,322v1h1v-1zM299,344v1h1v-1zM300,316v1h1v-1zM300,323v1h1v-1zM300,345v1h1v-1zM301,317v1h1v-1zM301,324v1h1v-1zM301,337v3h1v-3zM301,346v1h1v-1zM302,318v1h1v-1zM302,325v1h1v-1zM302,333v4h1v-4zM302,340v1h1v-1zM302,347v1h1v-1zM303,258v1h1v-1zM303,319v1h1v-1zM303,326v1h1v-1zM303,330v3h1v-3zM303,341v1h1v-1zM303,348v1h1v-1zM304,259v1h1v-1zM304,320v1h1v-1zM304,327v3h1v-3zM304,342v1h1v-1zM304,349v1h1v-1zM305,260v1h1v-1zM305,321v1h1v-1zM305,343v1h1v-1zM305,350v1h1v-1zM306,261v1h1v-1zM306,322v1h1v-1zM306,344v1h1v-1zM306,351v1h1v-1zM307,253v3h1v-3zM307,262v1h1v-1zM307,345v1h1v-1zM307,352v1h1v-1zM308,249v4h1v-4zM308,256v1h1v-1zM308,263v1h1v-1zM308,346v1h1v-1zM308,353v1h1v-1zM309,246v3h1v-3zM309,257v1h1v-1zM309,264v1h1v-1zM309,347v1h1v-1zM309,354v1h1v-1zM309,369v2h1v-2zM310,245v1h1v-1zM310,258v1h1v-1zM310,265v1h1v-1zM310,348v1h1v-1zM310,355v1h1v-1zM310,365v4h1v-4zM310,371v1h1v-1zM311,259v1h1v-1zM311,266v1h1v-1zM311,349v1h1v-1zM311,356v1h1v-1zM311,362v3h1v-3zM311,372v1h1v-1zM312,260v1h1v-1zM312,267v1h1v-1zM312,290v1h1v-1zM312,350v1h1v-1zM312,357v5h1v-5zM312,373v1h1v-1zM313,261v1h1v-1zM313,268v1h1v-1zM313,291v1h1v-1zM313,351v1h1v-1zM313,374v1h1v-1zM314,262v1h1v-1zM314,269v1h1v-1zM314,292v1h1v-1zM314,352v1h1v-1zM315,263v1h1v-1zM315,270v1h1v-1zM315,285v2h1v-2zM315,293v1h1v-1zM315,353v1h1v-1zM316,264v1h1v-1zM316,271v1h1v-1zM316,281v4h1v-4zM316,287v1h1v-1zM316,294v1h1v-1zM317,265v1h1v-1zM317,272v1h1v-1zM317,277v4h1v-4zM317,288v1h1v-1zM317,295v1h1v-1zM318,266v1h1v-1zM318,273v4h1v-4zM318,289v1h1v-1zM318,296v1h1v-1zM319,267v1h1v-1zM319,290v1h1v-1zM319,297v1h1v-1zM320,268v1h1v-1zM320,291v1h1v-1zM320,298v1h1v-1zM321,269v1h1v-1zM321,292v1h1v-1zM321,299v1h1v-1zM321,321v1h1v-1zM322,293v1h1v-1zM322,300v1h1v-1zM322,322v1h1v-1zM323,294v1h1v-1zM323,301v1h1v-1zM323,323v1h1v-1zM324,295v1h1v-1zM324,302v1h1v-1zM324,313v4h1v-4zM324,324v1h1v-1zM325,296v1h1v-1zM325,303v1h1v-1zM325,309v4h1v-4zM325,318v1h1v-1zM325,325v1h1v-1zM326,297v1h1v-1zM326,306v3h1v-3zM326,319v1h1v-1zM326,326v1h1v-1zM327,298v1h1v-1zM327,305v1h1v-1zM327,320v1h1v-1zM327,327v1h1v-1zM328,299v1h1v-1zM328,321v1h1v-1zM328,328v1h1v-1zM329,300v1h1v-1zM329,322v1h1v-1zM329,329v1h1v-1zM329,352v1h1v-1zM330,323v1h1v-1zM330,330v1h1v-1zM330,353v1h1v-1zM331,324v1h1v-1zM331,331v1h1v-1zM331,354v1h1v-1zM332,325v1h1v-1zM332,332v1h1v-1zM332,345v4h1v-4zM332,355v1h1v-1zM333,326v1h1v-1zM333,333v1h1v-1zM333,341v4h1v-4zM333,349v1h1v-1zM333,356v1h1v-1zM334,327v1h1v-1zM334,334v1h1v-1zM334,337v4h1v-4zM334,350v1h1v-1zM334,357v1h1v-1zM335,245v1h1v-1zM335,328v1h1v-1zM335,335v2h1v-2zM335,351v1h1v-1zM335,358v1h1v-1zM336,246v1h1v-1zM336,268v1h1v-1zM336,329v1h1v-1zM336,352v1h1v-1zM336,359v1h1v-1zM337,247v1h1v-1zM337,269v1h1v-1zM337,330v1h1v-1zM337,353v1h1v-1zM337,360v1h1v-1zM338,248v1h1v-1zM338,261v3h1v-3zM338,270v1h1v-1zM338,331v1h1v-1zM338,354v1h1v-1zM338,361v1h1v-1zM339,249v1h1v-1zM339,257v4h1v-4zM339,264v1h1v-1zM339,271v1h1v-1zM339,355v1h1v-1zM339,362v1h1v-1zM340,250v1h1v-1zM340,253v4h1v-4zM340,265v1h1v-1zM340,272v1h1v-1zM340,356v1h1v-1zM340,363v1h1v-1zM341,251v2h1v-2zM341,266v1h1v-1zM341,273v1h1v-1zM341,357v1h1v-1zM341,364v1h1v-1zM341,373v2h1v-2zM342,245v1h1v-1zM342,267v1h1v-1zM342,274v1h1v-1zM342,358v1h1v-1zM342,365v1h1v-1zM342,369v4h1v-4zM343,246v1h1v-1zM343,268v1h1v-1zM343,275v1h1v-1zM343,297v1h1v-1zM343,359v1h1v-1zM343,366v3h1v-3zM344,269v1h1v-1zM344,276v1h1v-1zM344,299v1h1v-1zM344,360v1h1v-1zM345,270v1h1v-1zM345,277v1h1v-1zM345,300v1h1v-1zM345,361v1h1v-1zM346,271v1h1v-1zM346,278v1h1v-1zM346,293v2h1v-2zM346,301v1h1v-1zM347,272v1h1v-1zM347,279v1h1v-1zM347,289v4h1v-4zM347,295v1h1v-1zM347,302v1h1v-1zM347,363v1h1v-1zM348,273v1h1v-1zM348,280v1h1v-1zM348,285v4h1v-4zM348,296v1h1v-1zM348,303v1h1v-1zM349,274v1h1v-1zM349,281v4h1v-4zM349,297v1h1v-1zM349,304v1h1v-1zM350,275v1h1v-1zM350,298v1h1v-1zM350,305v1h1v-1zM351,276v1h1v-1zM351,299v1h1v-1zM351,306v1h1v-1zM351,328v1h1v-1zM352,277v1h1v-1zM352,300v1h1v-1zM352,307v1h1v-1zM352,330v1h1v-1zM353,301v1h1v-1zM353,308v1h1v-1zM353,331v1h1v-1zM354,302v1h1v-1zM354,309v1h1v-1zM354,324v2h1v-2zM354,332v1h1v-1zM355,303v1h1v-1zM355,310v1h1v-1zM355,321v3h1v-3zM355,326v1h1v-1zM355,333v1h1v-1zM356,304v1h1v-1zM356,311v1h1v-1zM356,317v4h1v-4zM356,327v1h1v-1zM356,334v1h1v-1zM357,305v1h1v-1zM357,312v1h1v-1zM357,314v3h1v-3zM357,328v1h1v-1zM357,335v1h1v-1zM358,245v1h1v-1zM358,306v1h1v-1zM358,329v1h1v-1zM358,336v1h1v-1zM359,246v1h1v-1zM359,307v1h1v-1zM359,330v1h1v-1zM359,337v1h1v-1zM360,247v1h1v-1zM360,308v1h1v-1zM360,331v1h1v-1zM360,338v1h1v-1zM360,360v1h1v-1zM361,248v1h1v-1zM361,332v1h1v-1zM361,339v1h1v-1zM361,361v1h1v-1zM362,249v1h1v-1zM362,333v1h1v-1zM362,340v1h1v-1zM362,362v1h1v-1zM363,250v1h1v-1zM363,334v1h1v-1zM363,341v1h1v-1zM363,353v4h1v-4zM363,363v1h1v-1zM364,251v1h1v-1zM364,335v1h1v-1zM364,342v1h1v-1zM364,349v4h1v-4zM364,357v1h1v-1zM364,364v1h1v-1zM365,245v1h1v-1zM365,252v1h1v-1zM365,336v1h1v-1zM365,345v4h1v-4zM365,358v1h1v-1zM365,365v1h1v-1zM366,246v1h1v-1zM366,253v1h1v-1zM366,276v1h1v-1zM366,337v1h1v-1zM366,344v1h1v-1zM366,359v1h1v-1zM366,366v1h1v-1zM367,247v1h1v-1zM367,254v1h1v-1zM367,277v1h1v-1zM367,338v1h1v-1zM367,360v1h1v-1zM367,367v1h1v-1zM368,248v1h1v-1zM368,255v1h1v-1zM368,278v1h1v-1zM368,339v1h1v-1zM368,361v1h1v-1zM368,368v1h1v-1zM369,249v1h1v-1zM369,256v1h1v-1zM369,268v5h1v-5zM369,279v1h1v-1zM369,362v1h1v-1zM369,369v1h1v-1zM370,250v1h1v-1zM370,257v1h1v-1zM370,265v3h1v-3zM370,273v1h1v-1zM370,280v1h1v-1zM370,363v1h1v-1zM370,370v1h1v-1zM371,251v1h1v-1zM371,258v1h1v-1zM371,261v4h1v-4zM371,274v1h1v-1zM371,281v1h1v-1zM371,364v1h1v-1zM371,371v1h1v-1zM372,252v1h1v-1zM372,259v2h1v-2zM372,275v1h1v-1zM372,282v1h1v-1zM372,365v1h1v-1zM372,372v1h1v-1zM373,253v1h1v-1zM373,276v1h1v-1zM373,283v1h1v-1zM373,366v1h1v-1zM373,373v1h1v-1zM374,254v1h1v-1zM374,277v1h1v-1zM374,284v1h1v-1zM374,367v1h1v-1zM374,374v1h1v-1zM375,256v1h1v-1zM375,278v1h1v-1zM375,285v1h1v-1zM375,307v1h1v-1zM375,368v1h1v-1zM376,279v1h1v-1zM376,286v1h1v-1zM376,308v1h1v-1zM376,369v1h1v-1zM377,280v1h1v-1zM377,287v1h1v-1zM377,300v3h1v-3zM377,309v1h1v-1zM377,370v1h1v-1zM378,281v1h1v-1zM378,288v1h1v-1zM378,297v3h1v-3zM378,303v1h1v-1zM378,310v1h1v-1zM378,371v1h1v-1zM379,282v1h1v-1zM379,289v1h1v-1zM379,293v4h1v-4zM379,304v1h1v-1zM379,311v1h1v-1zM380,283v1h1v-1zM380,290v3h1v-3zM380,305v1h1v-1zM380,312v1h1v-1zM381,284v1h1v-1zM381,306v1h1v-1zM381,313v1h1v-1zM382,285v1h1v-1zM382,307v1h1v-1zM382,314v1h1v-1zM383,308v1h1v-1zM383,315v1h1v-1zM383,338v1h1v-1zM384,309v1h1v-1zM384,316v1h1v-1zM384,339v1h1v-1zM385,310v1h1v-1zM385,317v1h1v-1zM385,332v2h1v-2zM385,340v1h1v-1zM386,311v1h1v-1zM386,318v1h1v-1zM386,328v4h1v-4zM386,334v1h1v-1zM386,341v1h1v-1zM387,312v1h1v-1zM387,319v1h1v-1zM387,325v3h1v-3zM387,335v1h1v-1zM387,342v1h1v-1zM388,253v1h1v-1zM388,313v1h1v-1zM388,320v5h1v-5zM388,336v1h1v-1zM388,343v1h1v-1zM389,254v1h1v-1zM389,314v1h1v-1zM389,337v1h1v-1zM389,344v1h1v-1zM390,255v1h1v-1zM390,315v1h1v-1zM390,338v1h1v-1zM390,345v1h1v-1zM390,367v1h1v-1zM391,248v2h1v-2zM391,256v1h1v-1zM391,316v1h1v-1zM391,339v1h1v-1zM391,346v1h1v-1zM391,369v1h1v-1zM392,245v3h1v-3zM392,250v1h1v-1zM392,257v1h1v-1zM392,340v1h1v-1zM392,347v1h1v-1zM392,370v1h1v-1zM393,251v1h1v-1zM393,258v1h1v-1zM393,341v1h1v-1zM393,348v1h1v-1zM393,364v1h1v-1zM393,371v1h1v-1zM394,252v1h1v-1zM394,259v1h1v-1zM394,342v1h1v-1zM394,349v1h1v-1zM394,360v4h1v-4zM394,365v1h1v-1zM394,372v1h1v-1zM395,253v1h1v-1zM395,260v1h1v-1zM395,343v1h1v-1zM395,350v1h1v-1zM395,357v3h1v-3zM395,366v1h1v-1zM395,373v1h1v-1zM396,254v1h1v-1zM396,261v1h1v-1zM396,344v1h1v-1zM396,351v1h1v-1zM396,353v4h1v-4zM396,367v1h1v-1zM396,374v1h1v-1zM397,255v1h1v-1zM397,262v1h1v-1zM397,284v1h1v-1zM397,345v1h1v-1zM397,352v1h1v-1zM397,368v1h1v-1zM398,256v1h1v-1zM398,263v1h1v-1zM398,285v1h1v-1zM398,346v1h1v-1zM398,369v1h1v-1zM399,257v1h1v-1zM399,264v1h1v-1zM399,286v1h1v-1zM399,347v1h1v-1zM399,370v1h1v-1zM400,258v1h1v-1zM400,265v1h1v-1zM400,276v4h1v-4zM400,287v1h1v-1zM400,371v1h1v-1zM401,259v1h1v-1zM401,266v1h1v-1zM401,273v3h1v-3zM401,281v1h1v-1zM401,288v1h1v-1zM401,372v1h1v-1zM402,260v1h1v-1zM402,269v4h1v-4zM402,282v1h1v-1zM402,289v1h1v-1zM402,373v1h1v-1zM403,261v1h1v-1zM403,268v1h1v-1zM403,283v1h1v-1zM403,290v1h1v-1zM403,374v1h1v-1zM404,262v1h1v-1zM404,284v1h1v-1zM404,291v1h1v-1zM405,263v1h1v-1zM405,285v1h1v-1zM405,292v1h1v-1zM405,315v1h1v-1zM406,286v1h1v-1zM406,293v1h1v-1zM406,316v1h1v-1zM407,287v1h1v-1zM407,294v1h1v-1zM407,317v1h1v-1zM408,288v1h1v-1zM408,295v1h1v-1zM408,308v4h1v-4zM408,318v1h1v-1zM409,289v1h1v-1zM409,296v1h1v-1zM409,304v4h1v-4zM409,312v1h1v-1zM409,319v1h1v-1zM410,290v1h1v-1zM410,297v1h1v-1zM410,301v3h1v-3zM410,313v1h1v-1zM410,320v1h1v-1zM411,291v1h1v-1zM411,298v3h1v-3zM411,314v1h1v-1zM411,321v1h1v-1zM412,292v1h1v-1zM412,315v1h1v-1zM412,322v1h1v-1zM413,293v1h1v-1zM413,316v1h1v-1zM413,323v1h1v-1zM414,294v1h1v-1zM414,317v1h1v-1zM414,324v1h1v-1zM414,346v1h1v-1zM415,318v1h1v-1zM415,325v1h1v-1zM415,347v1h1v-1zM416,319v1h1v-1zM416,326v1h1v-1zM416,340v2h1v-2zM416,348v1h1v-1zM417,320v1h1v-1zM417,327v1h1v-1zM417,336v4h1v-4zM417,342v1h1v-1zM417,349v1h1v-1zM418,321v1h1v-1zM418,328v1h1v-1zM418,333v3h1v-3zM418,343v1h1v-1zM418,350v1h1v-1zM419,322v1h1v-1zM419,329v4h1v-4zM419,344v1h1v-1zM419,351v1h1v-1zM420,262v1h1v-1zM420,323v1h1v-1zM420,345v1h1v-1zM420,352v1h1v-1zM421,263v1h1v-1zM421,324v1h1v-1zM421,346v1h1v-1zM421,353v1h1v-1zM422,256v2h1v-2zM422,264v1h1v-1zM422,325v1h1v-1zM422,347v1h1v-1zM422,354v1h1v-1zM423,252v4h1v-4zM423,258v1h1v-1zM423,265v1h1v-1zM423,326v1h1v-1zM423,348v1h1v-1zM423,355v1h1v-1zM424,248v4h1v-4zM424,259v1h1v-1zM424,266v1h1v-1zM424,349v1h1v-1zM424,356v1h1v-1zM424,372v1h1v-1zM425,245v3h1v-3zM425,260v1h1v-1zM425,267v1h1v-1zM425,350v1h1v-1zM425,357v1h1v-1zM425,368v4h1v-4zM425,373v1h1v-1zM426,261v1h1v-1zM426,268v1h1v-1zM426,351v1h1v-1zM426,358v1h1v-1zM426,364v4h1v-4zM426,374v1h1v-1zM427,262v1h1v-1zM427,269v1h1v-1zM427,291v1h1v-1zM427,352v1h1v-1zM427,359v1h1v-1zM427,361v3h1v-3zM428,263v1h1v-1zM428,270v1h1v-1zM428,293v1h1v-1zM428,353v1h1v-1zM428,360v1h1v-1zM429,264v1h1v-1zM429,271v1h1v-1zM429,294v1h1v-1zM429,354v1h1v-1zM430,265v1h1v-1zM430,272v1h1v-1zM430,288v1h1v-1zM430,295v1h1v-1zM430,355v1h1v-1zM431,266v1h1v-1zM431,273v1h1v-1zM431,284v4h1v-4zM431,289v1h1v-1zM431,296v1h1v-1zM432,267v1h1v-1zM432,274v1h1v-1zM432,280v4h1v-4zM432,290v1h1v-1zM432,297v1h1v-1zM433,268v1h1v-1zM433,275v1h1v-1zM433,277v3h1v-3zM433,291v1h1v-1zM433,298v1h1v-1zM434,269v1h1v-1zM434,276v1h1v-1zM434,292v1h1v-1zM434,299v1h1v-1zM435,270v1h1v-1zM435,293v1h1v-1zM435,300v1h1v-1zM435,322v1h1v-1zM436,271v1h1v-1zM436,294v1h1v-1zM436,301v1h1v-1zM436,323v1h1v-1zM437,295v1h1v-1zM437,302v1h1v-1zM437,324v1h1v-1zM438,296v1h1v-1zM438,303v1h1v-1zM438,325v1h1v-1zM439,297v1h1v-1zM439,304v1h1v-1zM439,316v4h1v-4zM439,326v1h1v-1zM440,298v1h1v-1zM440,305v1h1v-1zM440,312v4h1v-4zM440,320v1h1v-1zM440,327v1h1v-1zM441,299v1h1v-1zM441,308v4h1v-4zM441,321v1h1v-1zM441,328v1h1v-1zM442,300v1h1v-1zM442,307v1h1v-1zM442,322v1h1v-1zM442,329v1h1v-1zM443,301v1h1v-1zM443,323v1h1v-1zM443,330v1h1v-1zM443,353v1h1v-1zM444,302v1h1v-1zM444,324v1h1v-1zM444,331v1h1v-1zM444,354v1h1v-1zM445,325v1h1v-1zM445,332v1h1v-1zM445,355v1h1v-1zM446,326v1h1v-1zM446,333v1h1v-1zM446,356v1h1v-1zM447,327v1h1v-1zM447,334v1h1v-1zM447,348v3h1v-3zM447,357v1h1v-1zM448,245v1h1v-1zM448,328v1h1v-1zM448,335v1h1v-1zM448,344v4h1v-4zM448,351v1h1v-1zM448,358v1h1v-1zM449,246v1h1v-1zM449,329v1h1v-1zM449,336v1h1v-1zM449,340v4h1v-4zM449,352v1h1v-1zM449,359v1h1v-1zM450,247v1h1v-1zM450,330v1h1v-1zM450,337v3h1v-3zM450,353v1h1v-1zM450,360v1h1v-1zM451,248v1h1v-1zM451,270v1h1v-1zM451,331v1h1v-1zM451,354v1h1v-1zM451,361v1h1v-1zM452,249v1h1v-1zM452,271v1h1v-1zM452,332v1h1v-1zM452,355v1h1v-1zM452,362v1h1v-1zM453,250v1h1v-1zM453,264v3h1v-3zM453,272v1h1v-1zM453,333v1h1v-1zM453,356v1h1v-1zM453,363v1h1v-1zM454,251v1h1v-1zM454,260v4h1v-4zM454,267v1h1v-1zM454,273v1h1v-1zM454,357v1h1v-1zM454,364v1h1v-1zM455,245v1h1v-1zM455,252v1h1v-1zM455,256v4h1v-4zM455,268v1h1v-1zM455,274v1h1v-1zM455,358v1h1v-1zM455,365v1h1v-1zM456,246v1h1v-1zM456,253v3h1v-3zM456,269v1h1v-1zM456,275v1h1v-1zM456,359v1h1v-1zM456,366v1h1v-1zM457,247v1h1v-1zM457,270v1h1v-1zM457,276v1h1v-1zM457,360v1h1v-1zM457,367v1h1v-1zM457,372v3h1v-3zM458,248v1h1v-1zM458,271v1h1v-1zM458,277v1h1v-1zM458,361v1h1v-1zM458,368v4h1v-4zM459,272v1h1v-1zM459,278v1h1v-1zM459,301v1h1v-1zM459,362v1h1v-1zM460,250v1h1v-1zM460,273v1h1v-1zM460,279v1h1v-1zM460,302v1h1v-1zM460,363v1h1v-1zM461,274v1h1v-1zM461,280v1h1v-1zM461,295v2h1v-2zM461,303v1h1v-1zM461,364v1h1v-1zM462,275v1h1v-1zM462,281v1h1v-1zM462,292v3h1v-3zM462,297v1h1v-1zM462,304v1h1v-1zM462,365v1h1v-1zM463,276v1h1v-1zM463,282v1h1v-1zM463,288v4h1v-4zM463,298v1h1v-1zM463,305v1h1v-1zM464,277v1h1v-1zM464,283v5h1v-5zM464,299v1h1v-1zM464,306v1h1v-1zM465,278v1h1v-1zM465,300v1h1v-1zM465,307v1h1v-1zM466,279v1h1v-1zM466,301v1h1v-1zM466,308v1h1v-1zM467,302v1h1v-1zM467,309v1h1v-1zM467,332v1h1v-1zM468,303v1h1v-1zM468,310v1h1v-1zM468,333v1h1v-1zM469,304v1h1v-1zM469,311v1h1v-1zM469,327v1h1v-1zM469,334v1h1v-1zM470,305v1h1v-1zM470,312v1h1v-1zM470,324v3h1v-3zM470,328v1h1v-1zM470,335v1h1v-1zM471,306v1h1v-1zM471,313v1h1v-1zM471,320v4h1v-4zM471,329v1h1v-1zM471,336v1h1v-1zM472,246v1h1v-1zM472,307v1h1v-1zM472,314v1h1v-1zM472,316v4h1v-4zM472,330v1h1v-1zM472,337v1h1v-1zM473,247v1h1v-1zM473,308v1h1v-1zM473,315v1h1v-1zM473,331v1h1v-1zM473,338v1h1v-1zM474,248v1h1v-1zM474,309v1h1v-1zM474,332v1h1v-1zM474,339v1h1v-1zM474,361v1h1v-1zM475,249v1h1v-1zM475,310v1h1v-1zM475,333v1h1v-1zM475,340v1h1v-1zM475,362v1h1v-1zM476,250v1h1v-1zM476,334v1h1v-1zM476,341v1h1v-1zM476,363v1h1v-1zM477,251v1h1v-1zM477,335v1h1v-1zM477,342v1h1v-1zM477,364v1h1v-1zM478,245v1h1v-1zM478,252v1h1v-1zM478,336v1h1v-1zM478,343v1h1v-1zM478,355v4h1v-4zM478,365v1h1v-1zM479,246v1h1v-1zM479,253v1h1v-1zM479,337v1h1v-1zM479,344v1h1v-1zM479,352v3h1v-3zM479,359v1h1v-1zM479,366v1h1v-1zM480,247v1h1v-1zM480,254v1h1v-1zM480,338v1h1v-1zM480,345v1h1v-1zM480,348v4h1v-4zM480,360v1h1v-1zM480,367v1h1v-1zM481,248v1h1v-1zM481,255v1h1v-1zM481,278v1h1v-1zM481,339v1h1v-1zM481,346v2h1v-2zM481,361v1h1v-1zM481,368v1h1v-1zM482,249v1h1v-1zM482,256v1h1v-1zM482,279v1h1v-1zM482,340v1h1v-1zM482,362v1h1v-1zM482,369v1h1v-1zM483,250v1h1v-1zM483,257v1h1v-1zM483,280v1h1v-1zM483,341v1h1v-1zM483,363v1h1v-1zM483,370v1h1v-1zM484,251v1h1v-1zM484,258v1h1v-1zM484,271v4h1v-4zM484,281v1h1v-1zM484,364v1h1v-1zM484,371v1h1v-1zM485,252v1h1v-1zM485,259v1h1v-1zM485,268v3h1v-3zM485,275v1h1v-1zM485,282v1h1v-1zM485,365v1h1v-1zM485,372v1h1v-1zM486,253v1h1v-1zM486,260v1h1v-1zM486,264v4h1v-4zM486,276v1h1v-1zM486,283v1h1v-1zM486,366v1h1v-1zM486,373v1h1v-1zM487,254v1h1v-1zM487,261v3h1v-3zM487,277v1h1v-1zM487,284v1h1v-1zM487,367v1h1v-1zM487,374v1h1v-1zM488,255v1h1v-1zM488,278v1h1v-1zM488,285v1h1v-1zM488,368v1h1v-1zM489,256v1h1v-1zM489,279v1h1v-1zM489,286v1h1v-1zM489,369v1h1v-1zM490,257v1h1v-1zM490,280v1h1v-1zM490,287v1h1v-1zM490,309v1h1v-1zM490,370v1h1v-1zM491,258v1h1v-1zM491,281v1h1v-1zM491,288v1h1v-1zM491,310v1h1v-1zM491,371v1h1v-1zM492,282v1h1v-1zM492,289v1h1v-1zM492,303v3h1v-3zM492,311v1h1v-1zM492,372v1h1v-1zM493,283v1h1v-1zM493,290v1h1v-1zM493,300v3h1v-3zM493,306v1h1v-1zM493,312v1h1v-1zM494,284v1h1v-1zM494,291v1h1v-1zM494,296v4h1v-4zM494,307v1h1v-1zM494,313v1h1v-1zM495,285v1h1v-1zM495,292v4h1v-4zM495,308v1h1v-1zM495,314v1h1v-1zM496,286v1h1v-1zM496,309v1h1v-1zM496,315v1h1v-1zM497,310v1h1v-1zM498,257v30h1v-30zM498,288v1h1v-1zM498,311v5h1v-5zM498,317v1h1v-1zM498,340v32h1v-32zM128,140h31v1h-31zM63,141h11v1h-11zM80,141h27v1h-27zM126,141h2v1h-2zM159,141h5v1h-5zM170,141h15v1h-15zM187,141h7v1h-7zM222,141h10v1h-10zM181,142h3v1h-3zM177,143h4v1h-4zM105,144h2v1h-2zM173,144h4v1h-4zM220,146h2v1h-2zM100,147h3v1h-3zM97,148h3v1h-3zM107,148h2v1h-2zM93,149h4v1h-4zM216,149h2v1h-2zM89,150h4v1h-4zM213,150h3v1h-3zM209,151h4v1h-4zM204,152h5v1h-5zM230,155h2v1h-2zM84,168h2v1h-2zM76,170h5v1h-5zM73,171h3v1h-3zM69,172h4v1h-4zM67,173h2v1h-2zM62,176h2v1h-2zM62,177h2v1h-2zM62,178h2v1h-2zM62,179h2v1h-2zM224,180h2v1h-2zM220,181h4v1h-4zM217,182h3v1h-3zM212,183h5v1h-5zM230,185h2v1h-2zM62,192h2v1h-2zM70,206h2v1h-2zM215,209h2v1h-2zM70,212h2v1h-2zM228,212h4v1h-4zM70,213h2v1h-2zM224,213h4v1h-4zM70,214h2v1h-2zM221,214h3v1h-3zM68,220h2v1h-2zM71,222h2v1h-2zM64,223h2v1h-2zM62,224h2v1h-2zM211,235h2v1h-2zM244,244h8v1h-8zM277,244h34v1h-34zM334,244h8v1h-8zM356,244h2v1h-2zM364,244h29v1h-29zM425,244h23v1h-23zM454,244h24v1h-24zM229,245h3v1h-3zM352,245h4v1h-4zM348,246h4v1h-4zM344,247h4v1h-4zM468,247h4v1h-4zM464,248h4v1h-4zM459,249h5v1h-5zM76,250h2v1h-2zM271,250h3v1h-3zM268,251h3v1h-3zM264,252h4v1h-4zM387,252h2v1h-2zM260,253h4v1h-4zM384,253h3v1h-3zM71,254h3v1h-3zM380,254h4v1h-4zM68,255h3v1h-3zM375,255h5v1h-5zM64,256h4v1h-4zM496,256h3v1h-3zM62,257h2v1h-2zM492,257h4v1h-4zM300,259h3v1h-3zM296,260h4v1h-4zM292,261h4v1h-4zM416,261h4v1h-4zM193,262h2v1h-2zM412,262h4v1h-4zM408,263h4v1h-4zM406,264h2v1h-2zM91,265h6v1h-6zM215,265h4v1h-4zM287,265h2v1h-2zM97,266h2v1h-2zM212,266h3v1h-3zM187,267h2v1h-2zM208,267h4v1h-4zM331,267h5v1h-5zM402,267h2v1h-2zM328,268h3v1h-3zM324,269h4v1h-4zM447,269h4v1h-4zM102,270h2v1h-2zM183,270h2v1h-2zM322,270h2v1h-2zM444,270h3v1h-3zM104,271h2v1h-2zM181,271h2v1h-2zM440,271h4v1h-4zM437,272h3v1h-3zM107,273h2v1h-2zM178,273h2v1h-2zM247,273h4v1h-4zM109,274h2v1h-2zM244,274h3v1h-3zM111,275h2v1h-2zM174,275h3v1h-3zM240,275h4v1h-4zM363,275h3v1h-3zM113,276h2v1h-2zM172,276h2v1h-2zM238,276h2v1h-2zM360,276h3v1h-3zM86,277h31v1h-31zM167,277h2v1h-2zM171,277h32v1h-32zM356,277h4v1h-4zM479,277h2v1h-2zM120,278h6v1h-6zM162,278h5v1h-5zM284,278h2v1h-2zM353,278h3v1h-3zM476,278h3v1h-3zM472,279h4v1h-4zM399,280h2v1h-2zM467,280h5v1h-5zM279,281h3v1h-3zM62,282h2v1h-2zM275,282h4v1h-4zM272,283h3v1h-3zM395,283h2v1h-2zM268,284h4v1h-4zM391,284h4v1h-4zM79,285h4v1h-4zM388,285h3v1h-3zM75,286h4v1h-4zM383,286h5v1h-5zM72,287h3v1h-3zM202,287h2v1h-2zM497,287h2v1h-2zM69,288h3v1h-3zM311,289h2v1h-2zM307,290h4v1h-4zM304,291h3v1h-3zM299,292h5v1h-5zM423,292h5v1h-5zM420,293h3v1h-3zM416,294h4v1h-4zM414,295h2v1h-2zM223,296h4v1h-4zM220,297h3v1h-3zM216,298h4v1h-4zM339,298h5v1h-5zM336,299h3v1h-3zM332,300h4v1h-4zM455,300h4v1h-4zM330,301h2v1h-2zM451,301h4v1h-4zM448,302h3v1h-3zM445,303h3v1h-3zM255,304h5v1h-5zM326,304h2v1h-2zM251,305h4v1h-4zM248,306h3v1h-3zM371,306h4v1h-4zM441,306h2v1h-2zM246,307h2v1h-2zM367,307h4v1h-4zM364,308h3v1h-3zM487,308h3v1h-3zM361,309h3v1h-3zM483,309h4v1h-4zM480,310h3v1h-3zM476,311h4v1h-4zM62,312h2v1h-2zM287,312h3v1h-3zM283,313h4v1h-4zM357,313h2v1h-2zM280,314h3v1h-3zM403,314h2v1h-2zM277,315h3v1h-3zM399,315h4v1h-4zM396,316h3v1h-3zM497,316h2v1h-2zM83,317h2v1h-2zM323,317h2v1h-2zM392,317h4v1h-4zM79,318h4v1h-4zM203,318h3v1h-3zM77,319h2v1h-2zM319,320h2v1h-2zM315,321h4v1h-4zM73,322h2v1h-2zM311,322h4v1h-4zM307,323h4v1h-4zM431,323h4v1h-4zM427,324h4v1h-4zM424,325h3v1h-3zM235,326h2v1h-2zM231,327h4v1h-4zM227,328h4v1h-4zM223,329h4v1h-4zM347,329h5v1h-5zM343,330h4v1h-4zM340,331h3v1h-3zM463,331h4v1h-4zM338,332h2v1h-2zM459,332h4v1h-4zM456,333h3v1h-3zM454,334h2v1h-2zM70,335h2v1h-2zM263,335h5v1h-5zM259,336h4v1h-4zM255,337h4v1h-4zM379,337h4v1h-4zM66,338h2v1h-2zM375,338h4v1h-4zM62,339h4v1h-4zM371,339h4v1h-4zM495,339h3v1h-3zM369,340h2v1h-2zM491,340h4v1h-4zM120,341h6v1h-6zM162,341h5v1h-5zM487,341h4v1h-4zM102,342h15v1h-15zM167,342h2v1h-2zM175,342h10v1h-10zM191,342h12v1h-12zM484,342h3v1h-3zM113,343h2v1h-2zM173,343h2v1h-2zM295,343h4v1h-4zM365,343h2v1h-2zM110,344h3v1h-3zM174,344h2v1h-2zM291,344h4v1h-4zM176,345h2v1h-2zM216,345h2v1h-2zM287,345h4v1h-4zM411,345h3v1h-3zM107,346h2v1h-2zM178,346h2v1h-2zM285,346h2v1h-2zM407,346h4v1h-4zM95,347h4v1h-4zM105,347h2v1h-2zM403,347h4v1h-4zM91,348h4v1h-4zM181,348h2v1h-2zM400,348h3v1h-3zM87,349h4v1h-4zM183,349h2v1h-2zM211,349h3v1h-3zM281,349h2v1h-2zM85,350h2v1h-2zM207,350h4v1h-4zM203,351h4v1h-4zM327,351h2v1h-2zM187,352h2v1h-2zM201,352h2v1h-2zM323,352h4v1h-4zM97,353h2v1h-2zM319,353h4v1h-4zM247,354h2v1h-2zM316,354h3v1h-3zM439,354h4v1h-4zM435,355h4v1h-4zM431,356h4v1h-4zM242,357h3v1h-3zM239,358h3v1h-3zM195,359h2v1h-2zM235,359h4v1h-4zM358,359h2v1h-2zM231,360h4v1h-4zM355,360h3v1h-3zM351,361h4v1h-4zM346,362h5v1h-5zM471,362h3v1h-3zM467,363h4v1h-4zM463,364h4v1h-4zM274,365h2v1h-2zM271,366h3v1h-3zM267,367h4v1h-4zM262,368h5v1h-5zM387,368h4v1h-4zM74,369h2v1h-2zM82,369h2v1h-2zM383,369h4v1h-4zM71,370h3v1h-3zM379,370h4v1h-4zM67,371h4v1h-4zM62,372h5v1h-5zM495,372h4v1h-4zM493,373h2v1h-2zM302,374h5v1h-5zM231,375h28v1h-28zM285,375h7v1h-7zM300,375h8v1h-8zM314,375h28v1h-28zM374,375h24v1h-24zM404,375h24v1h-24zM457,375h32v1h-32zM218,380h5v1h-5zM215,381h3v1h-3zM230,381h2v1h-2zM211,382h4v1h-4zM62,402h2v1h-2zM230,410h2v1h-2zM226,411h6v1h-6zM222,412h4v1h-4zM219,413h3v1h-3zM217,414h2v1h-2zM230,443h2v1h-2zM225,444h5v1h-5zM66,454h3v1h-3zM62,455h4v1h-4zM194,459h2v1h-2zM94,463h3v1h-3zM90,464h4v1h-4zM213,464h3v1h-3zM88,465h2v1h-2zM210,465h3v1h-3zM206,466h4v1h-4zM203,467h3v1h-3zM230,472h2v1h-2zM112,474h3v1h-3zM115,475h3v1h-3zM118,476h2v1h-2zM120,477h3v1h-3zM164,477h4v1h-4zM62,478h21v1h-21zM115,478h13v1h-13zM159,478h10v1h-10zM197,478h33v1h-33zM128,479h31v1h-31z"/>
<path shape-rendering="crispEdges" fill="#b30000" d="M52,133v354h1v-354zM55,136v348h1v-348zM59,139v342h1v-342zM74,208v6h1v-6zM74,406v6h1v-6zM75,199v9h1v-9zM75,214v9h1v-9zM75,397v9h1v-9zM75,412v9h1v-9zM76,194v5h1v-5zM76,223v5h1v-5zM76,392v5h1v-5zM76,421v5h1v-5zM77,190v4h1v-4zM77,228v4h1v-4zM77,388v4h1v-4zM77,426v4h1v-4zM78,188v2h1v-2zM78,200v22h1v-22zM78,232v2h1v-2zM78,386v2h1v-2zM78,398v22h1v-22zM78,430v2h1v-2zM79,185v3h1v-3zM79,196v4h1v-4zM79,222v4h1v-4zM79,234v3h1v-3zM79,383v3h1v-3zM79,394v4h1v-4zM79,420v4h1v-4zM79,432v3h1v-3zM80,183v2h1v-2zM80,192v4h1v-4zM80,226v4h1v-4zM80,237v2h1v-2zM80,381v2h1v-2zM80,390v4h1v-4zM80,424v4h1v-4zM80,435v2h1v-2zM81,180v3h1v-3zM81,189v3h1v-3zM81,200v22h1v-22zM81,230v3h1v-3zM81,239v3h1v-3zM81,378v3h1v-3zM81,387v3h1v-3zM81,398v22h1v-22zM81,428v3h1v-3zM81,437v3h1v-3zM82,179v1h1v-1zM82,187v2h1v-2zM82,196v4h1v-4zM82,222v4h1v-4zM82,233v2h1v-2zM82,242v1h1v-1zM82,377v1h1v-1zM82,385v2h1v-2zM82,394v4h1v-4zM82,420v4h1v-4zM82,431v2h1v-2zM82,440v1h1v-1zM83,177v2h1v-2zM83,184v3h1v-3zM83,192v4h1v-4zM83,226v4h1v-4zM83,235v3h1v-3zM83,243v2h1v-2zM83,375v2h1v-2zM83,382v3h1v-3zM83,390v4h1v-4zM83,424v4h1v-4zM83,433v3h1v-3zM83,441v2h1v-2zM84,175v2h1v-2zM84,182v2h1v-2zM84,190v2h1v-2zM84,230v2h1v-2zM84,238v2h1v-2zM84,245v2h1v-2zM84,373v2h1v-2zM84,380v2h1v-2zM84,388v2h1v-2zM84,428v2h1v-2zM84,436v2h1v-2zM84,443v2h1v-2zM85,174v1h1v-1zM85,180v2h1v-2zM85,187v3h1v-3zM85,232v3h1v-3zM85,240v2h1v-2zM85,247v1h1v-1zM85,372v1h1v-1zM85,378v2h1v-2zM85,385v3h1v-3zM85,430v3h1v-3zM85,438v2h1v-2zM85,445v1h1v-1zM86,172v2h1v-2zM86,178v2h1v-2zM86,185v2h1v-2zM86,235v2h1v-2zM86,242v2h1v-2zM86,248v2h1v-2zM86,370v2h1v-2zM86,376v2h1v-2zM86,383v2h1v-2zM86,433v2h1v-2zM86,440v2h1v-2zM86,446v2h1v-2zM87,170v2h1v-2zM87,177v1h1v-1zM87,182v3h1v-3zM87,237v3h1v-3zM87,244v1h1v-1zM87,250v2h1v-2zM87,368v2h1v-2zM87,375v1h1v-1zM87,380v3h1v-3zM87,435v3h1v-3zM87,442v1h1v-1zM87,448v2h1v-2zM88,169v1h1v-1zM88,175v2h1v-2zM88,181v1h1v-1zM88,240v1h1v-1zM88,245v2h1v-2zM88,252v1h1v-1zM88,281v58h1v-58zM88,367v1h1v-1zM88,373v2h1v-2zM88,379v1h1v-1zM88,438v1h1v-1zM88,443v2h1v-2zM88,450v1h1v-1zM89,168v1h1v-1zM89,173v2h1v-2zM89,179v2h1v-2zM89,241v2h1v-2zM89,247v2h1v-2zM89,253v1h1v-1zM89,366v1h1v-1zM89,371v2h1v-2zM89,377v2h1v-2zM89,439v2h1v-2zM89,445v2h1v-2zM89,451v1h1v-1zM90,167v1h1v-1zM90,172v1h1v-1zM90,178v1h1v-1zM90,243v1h1v-1zM90,249v1h1v-1zM90,254v1h1v-1zM90,365v1h1v-1zM90,370v1h1v-1zM90,376v1h1v-1zM90,441v1h1v-1zM90,447v1h1v-1zM90,452v1h1v-1zM91,166v1h1v-1zM91,171v1h1v-1zM91,176v2h1v-2zM91,244v2h1v-2zM91,250v1h1v-1zM91,255v1h1v-1zM91,284v52h1v-52zM91,364v1h1v-1zM91,369v1h1v-1zM91,374v2h1v-2zM91,442v2h1v-2zM91,448v1h1v-1zM91,453v1h1v-1zM92,165v1h1v-1zM92,170v1h1v-1zM92,174v2h1v-2zM92,246v2h1v-2zM92,251v1h1v-1zM92,256v1h1v-1zM92,363v1h1v-1zM92,368v1h1v-1zM92,372v2h1v-2zM92,444v2h1v-2zM92,449v1h1v-1zM92,454v1h1v-1zM93,163v2h1v-2zM93,168v2h1v-2zM93,173v1h1v-1zM93,248v1h1v-1zM93,252v2h1v-2zM93,257v2h1v-2zM93,361v2h1v-2zM93,366v2h1v-2zM93,371v1h1v-1zM93,446v1h1v-1zM93,450v2h1v-2zM93,455v2h1v-2zM94,162v1h1v-1zM94,167v1h1v-1zM94,172v1h1v-1zM94,249v1h1v-1zM94,254v1h1v-1zM94,259v1h1v-1zM94,287v46h1v-46zM94,360v1h1v-1zM94,365v1h1v-1zM94,370v1h1v-1zM94,447v1h1v-1zM94,452v1h1v-1zM94,457v1h1v-1zM95,161v1h1v-1zM95,166v1h1v-1zM95,171v1h1v-1zM95,250v1h1v-1zM95,255v1h1v-1zM95,260v1h1v-1zM95,359v1h1v-1zM95,364v1h1v-1zM95,369v1h1v-1zM95,448v1h1v-1zM95,453v1h1v-1zM95,458v1h1v-1zM96,165v1h1v-1zM96,170v1h1v-1zM96,251v1h1v-1zM96,256v1h1v-1zM96,363v1h1v-1zM96,368v1h1v-1zM96,449v1h1v-1zM96,454v1h1v-1zM97,164v1h1v-1zM97,168v2h1v-2zM97,252v2h1v-2zM97,257v1h1v-1zM97,362v1h1v-1zM97,366v2h1v-2zM97,450v2h1v-2zM97,455v1h1v-1zM98,159v1h1v-1zM98,163v1h1v-1zM98,167v1h1v-1zM98,254v1h1v-1zM98,258v1h1v-1zM98,262v1h1v-1zM98,357v1h1v-1zM98,361v1h1v-1zM98,365v1h1v-1zM98,452v1h1v-1zM98,456v1h1v-1zM98,460v1h1v-1zM99,158v1h1v-1zM99,162v1h1v-1zM99,166v1h1v-1zM99,255v1h1v-1zM99,259v1h1v-1zM99,263v1h1v-1zM99,356v1h1v-1zM99,360v1h1v-1zM99,364v1h1v-1zM99,453v1h1v-1zM99,457v1h1v-1zM99,461v1h1v-1zM100,157v1h1v-1zM100,165v1h1v-1zM100,256v1h1v-1zM100,264v1h1v-1zM100,355v1h1v-1zM100,363v1h1v-1zM100,454v1h1v-1zM100,462v1h1v-1zM101,156v1h1v-1zM101,265v1h1v-1zM101,354v1h1v-1zM101,463v1h1v-1zM102,160v1h1v-1zM102,261v1h1v-1zM102,358v1h1v-1zM102,459v1h1v-1zM103,159v1h1v-1zM103,163v1h1v-1zM103,258v1h1v-1zM103,262v1h1v-1zM103,357v1h1v-1zM103,361v1h1v-1zM103,456v1h1v-1zM103,460v1h1v-1zM104,154v1h1v-1zM104,158v1h1v-1zM104,162v1h1v-1zM104,259v1h1v-1zM104,267v1h1v-1zM104,352v1h1v-1zM104,356v1h1v-1zM104,360v1h1v-1zM104,457v1h1v-1zM104,465v1h1v-1zM105,161v1h1v-1zM105,260v1h1v-1zM105,359v1h1v-1zM105,458v1h1v-1zM106,264v1h1v-1zM106,462v1h1v-1zM107,156v1h1v-1zM107,265v1h1v-1zM107,354v1h1v-1zM107,463v1h1v-1zM108,159v1h1v-1zM108,262v1h1v-1zM108,357v1h1v-1zM108,460v1h1v-1zM109,151v1h1v-1zM109,270v1h1v-1zM109,349v1h1v-1zM109,468v1h1v-1zM111,157v1h1v-1zM111,264v1h1v-1zM111,355v1h1v-1zM111,462v1h1v-1zM112,153v1h1v-1zM112,268v1h1v-1zM112,351v1h1v-1zM112,466v1h1v-1zM175,157v1h1v-1zM175,264v1h1v-1zM175,355v1h1v-1zM175,462v1h1v-1zM176,154v1h1v-1zM176,267v1h1v-1zM176,352v1h1v-1zM176,465v1h1v-1zM179,152v1h1v-1zM179,156v1h1v-1zM179,265v1h1v-1zM179,269v1h1v-1zM179,350v1h1v-1zM179,354v1h1v-1zM179,463v1h1v-1zM179,467v1h1v-1zM180,160v1h1v-1zM180,261v1h1v-1zM180,358v1h1v-1zM180,459v1h1v-1zM181,161v1h1v-1zM181,260v1h1v-1zM181,359v1h1v-1zM181,458v1h1v-1zM182,154v1h1v-1zM182,158v1h1v-1zM182,162v1h1v-1zM182,259v1h1v-1zM182,263v1h1v-1zM182,267v1h1v-1zM182,352v1h1v-1zM182,356v1h1v-1zM182,360v1h1v-1zM182,457v1h1v-1zM182,461v1h1v-1zM182,465v1h1v-1zM183,159v1h1v-1zM183,163v1h1v-1zM183,258v1h1v-1zM183,262v1h1v-1zM183,357v1h1v-1zM183,361v1h1v-1zM183,456v1h1v-1zM183,460v1h1v-1zM185,156v1h1v-1zM185,265v1h1v-1zM185,354v1h1v-1zM185,463v1h1v-1zM186,157v1h1v-1zM186,161v1h1v-1zM186,165v1h1v-1zM186,256v1h1v-1zM186,260v1h1v-1zM186,264v1h1v-1zM186,355v1h1v-1zM186,359v1h1v-1zM186,363v1h1v-1zM186,454v1h1v-1zM186,458v1h1v-1zM186,462v1h1v-1zM187,158v1h1v-1zM187,162v1h1v-1zM187,166v1h1v-1zM187,255v1h1v-1zM187,259v1h1v-1zM187,263v1h1v-1zM187,356v1h1v-1zM187,360v1h1v-1zM187,364v1h1v-1zM187,453v1h1v-1zM187,457v1h1v-1zM187,461v1h1v-1zM188,159v1h1v-1zM188,163v1h1v-1zM188,167v1h1v-1zM188,254v1h1v-1zM188,258v1h1v-1zM188,262v1h1v-1zM188,357v1h1v-1zM188,361v1h1v-1zM188,365v1h1v-1zM188,452v1h1v-1zM188,456v1h1v-1zM188,460v1h1v-1zM189,164v1h1v-1zM189,168v1h1v-1zM189,253v1h1v-1zM189,257v1h1v-1zM189,362v1h1v-1zM189,366v1h1v-1zM189,451v1h1v-1zM189,455v1h1v-1zM190,165v1h1v-1zM190,169v2h1v-2zM190,251v2h1v-2zM190,256v1h1v-1zM190,363v1h1v-1zM190,367v2h1v-2zM190,449v2h1v-2zM190,454v1h1v-1zM191,161v1h1v-1zM191,166v1h1v-1zM191,171v1h1v-1zM191,250v1h1v-1zM191,255v1h1v-1zM191,260v1h1v-1zM191,359v1h1v-1zM191,364v1h1v-1zM191,369v1h1v-1zM191,448v1h1v-1zM191,453v1h1v-1zM191,458v1h1v-1zM192,162v1h1v-1zM192,167v1h1v-1zM192,172v1h1v-1zM192,249v1h1v-1zM192,254v1h1v-1zM192,259v1h1v-1zM192,287v46h1v-46zM192,360v1h1v-1zM192,365v1h1v-1zM192,370v1h1v-1zM192,447v1h1v-1zM192,452v1h1v-1zM192,457v1h1v-1zM193,163v1h1v-1zM193,168v2h1v-2zM193,173v1h1v-1zM193,248v1h1v-1zM193,252v2h1v-2zM193,258v1h1v-1zM193,361v1h1v-1zM193,366v2h1v-2zM193,371v1h1v-1zM193,446v1h1v-1zM193,450v2h1v-2zM193,456v1h1v-1zM194,164v2h1v-2zM194,170v1h1v-1zM194,174v2h1v-2zM194,246v2h1v-2zM194,251v1h1v-1zM194,256v2h1v-2zM194,362v2h1v-2zM194,368v1h1v-1zM194,372v2h1v-2zM194,444v2h1v-2zM194,449v1h1v-1zM194,454v2h1v-2zM195,166v1h1v-1zM195,171v1h1v-1zM195,176v1h1v-1zM195,245v1h1v-1zM195,250v1h1v-1zM195,255v1h1v-1zM195,284v52h1v-52zM195,364v1h1v-1zM195,369v1h1v-1zM195,374v1h1v-1zM195,443v1h1v-1zM195,448v1h1v-1zM195,453v1h1v-1zM196,167v1h1v-1zM196,172v1h1v-1zM196,177v2h1v-2zM196,243v2h1v-2zM196,249v1h1v-1zM196,254v1h1v-1zM196,365v1h1v-1zM196,370v1h1v-1zM196,375v2h1v-2zM196,441v2h1v-2zM196,447v1h1v-1zM196,452v1h1v-1zM197,168v1h1v-1zM197,173v2h1v-2zM197,179v2h1v-2zM197,241v2h1v-2zM197,247v2h1v-2zM197,253v1h1v-1zM197,366v1h1v-1zM197,371v2h1v-2zM197,377v2h1v-2zM197,439v2h1v-2zM197,445v2h1v-2zM197,451v1h1v-1zM198,169v1h1v-1zM198,175v2h1v-2zM198,181v1h1v-1zM198,240v1h1v-1zM198,245v2h1v-2zM198,252v1h1v-1zM198,367v1h1v-1zM198,373v2h1v-2zM198,379v1h1v-1zM198,438v1h1v-1zM198,443v2h1v-2zM198,450v1h1v-1zM199,170v2h1v-2zM199,177v1h1v-1zM199,182v2h1v-2zM199,238v2h1v-2zM199,244v1h1v-1zM199,250v2h1v-2zM199,281v58h1v-58zM199,368v2h1v-2zM199,375v1h1v-1zM199,380v2h1v-2zM199,436v2h1v-2zM199,442v1h1v-1zM199,448v2h1v-2zM200,172v1h1v-1zM200,178v2h1v-2zM200,184v3h1v-3zM200,235v3h1v-3zM200,242v2h1v-2zM200,249v1h1v-1zM200,370v1h1v-1zM200,376v2h1v-2zM200,382v3h1v-3zM200,433v3h1v-3zM200,440v2h1v-2zM200,447v1h1v-1zM201,173v2h1v-2zM201,180v1h1v-1zM201,187v2h1v-2zM201,233v2h1v-2zM201,240v2h1v-2zM201,247v2h1v-2zM201,371v2h1v-2zM201,378v1h1v-1zM201,385v2h1v-2zM201,431v2h1v-2zM201,438v2h1v-2zM201,445v2h1v-2zM202,175v2h1v-2zM202,181v3h1v-3zM202,189v3h1v-3zM202,230v3h1v-3zM202,238v2h1v-2zM202,245v2h1v-2zM202,373v2h1v-2zM202,379v3h1v-3zM202,387v3h1v-3zM202,428v3h1v-3zM202,436v2h1v-2zM202,443v2h1v-2zM203,177v1h1v-1zM203,184v2h1v-2zM203,192v4h1v-4zM203,226v4h1v-4zM203,236v2h1v-2zM203,244v1h1v-1zM203,375v1h1v-1zM203,382v2h1v-2zM203,390v4h1v-4zM203,424v4h1v-4zM203,434v2h1v-2zM203,442v1h1v-1zM204,178v2h1v-2zM204,186v3h1v-3zM204,196v4h1v-4zM204,222v4h1v-4zM204,233v3h1v-3zM204,242v2h1v-2zM204,376v2h1v-2zM204,384v3h1v-3zM204,394v4h1v-4zM204,420v4h1v-4zM204,431v3h1v-3zM204,440v2h1v-2zM205,180v3h1v-3zM205,189v2h1v-2zM205,200v10h1v-10zM205,212v10h1v-10zM205,231v2h1v-2zM205,239v3h1v-3zM205,378v3h1v-3zM205,387v2h1v-2zM205,398v10h1v-10zM205,410v10h1v-10zM205,429v2h1v-2zM205,437v3h1v-3zM206,183v2h1v-2zM206,191v5h1v-5zM206,210v2h1v-2zM206,226v5h1v-5zM206,237v2h1v-2zM206,381v2h1v-2zM206,389v5h1v-5zM206,408v2h1v-2zM206,424v5h1v-5zM206,435v2h1v-2zM207,185v2h1v-2zM207,196v4h1v-4zM207,222v4h1v-4zM207,235v2h1v-2zM207,383v2h1v-2zM207,394v4h1v-4zM207,420v4h1v-4zM207,433v2h1v-2zM208,187v3h1v-3zM208,200v10h1v-10zM208,212v10h1v-10zM208,232v3h1v-3zM208,385v3h1v-3zM208,398v10h1v-10zM208,410v10h1v-10zM208,430v3h1v-3zM209,190v4h1v-4zM209,210v2h1v-2zM209,228v4h1v-4zM209,388v4h1v-4zM209,408v2h1v-2zM209,426v4h1v-4zM210,194v4h1v-4zM210,224v4h1v-4zM210,392v4h1v-4zM210,422v4h1v-4zM211,198v9h1v-9zM211,215v9h1v-9zM211,396v9h1v-9zM211,413v9h1v-9zM212,207v8h1v-8zM212,405v8h1v-8zM234,139v102h1v-102zM234,379v102h1v-102zM237,136v102h1v-102zM237,382v102h1v-102zM240,133v102h1v-102zM240,385v102h1v-102zM501,242v136h1v-136zM505,239v142h1v-142zM508,236v148h1v-148zM52,132h189v1h-189zM55,135h183v1h-183zM59,138h176v1h-176zM133,142h21v1h-21zM129,143h4v1h-4zM154,143h4v1h-4zM125,144h4v1h-4zM158,144h4v1h-4zM121,145h4v1h-4zM137,145h13v1h-13zM162,145h4v1h-4zM119,146h2v1h-2zM130,146h7v1h-7zM150,146h7v1h-7zM166,146h2v1h-2zM116,147h3v1h-3zM126,147h4v1h-4zM157,147h4v1h-4zM168,147h3v1h-3zM114,148h2v1h-2zM123,148h3v1h-3zM137,148h13v1h-13zM161,148h4v1h-4zM171,148h2v1h-2zM112,149h2v1h-2zM120,149h3v1h-3zM131,149h6v1h-6zM150,149h6v1h-6zM165,149h2v1h-2zM173,149h2v1h-2zM110,150h2v1h-2zM118,150h2v1h-2zM127,150h4v1h-4zM156,150h5v1h-5zM167,150h2v1h-2zM175,150h2v1h-2zM115,151h3v1h-3zM123,151h4v1h-4zM161,151h3v1h-3zM169,151h3v1h-3zM177,151h2v1h-2zM107,152h2v1h-2zM113,152h2v1h-2zM121,152h2v1h-2zM164,152h2v1h-2zM172,152h2v1h-2zM105,153h2v1h-2zM118,153h3v1h-3zM166,153h3v1h-3zM174,153h2v1h-2zM180,153h2v1h-2zM110,154h2v1h-2zM116,154h2v1h-2zM169,154h2v1h-2zM102,155h2v1h-2zM108,155h2v1h-2zM114,155h2v1h-2zM171,155h2v1h-2zM177,155h2v1h-2zM183,155h2v1h-2zM112,156h2v1h-2zM173,156h2v1h-2zM105,157h2v1h-2zM180,157h2v1h-2zM109,158h2v1h-2zM176,158h2v1h-2zM178,159h2v1h-2zM96,160h2v1h-2zM106,160h2v1h-2zM184,160h2v1h-2zM189,160h2v1h-2zM100,161h2v1h-2zM101,164h2v1h-2zM184,164h2v1h-2zM240,235h269v1h-269zM237,238h269v1h-269zM234,241h268v1h-268zM101,257h2v1h-2zM184,257h2v1h-2zM100,260h2v1h-2zM96,261h2v1h-2zM106,261h2v1h-2zM184,261h2v1h-2zM189,261h2v1h-2zM178,262h2v1h-2zM104,263h2v1h-2zM109,263h2v1h-2zM176,263h2v1h-2zM180,264h2v1h-2zM112,265h2v1h-2zM173,265h2v1h-2zM102,266h2v1h-2zM108,266h2v1h-2zM114,266h2v1h-2zM171,266h2v1h-2zM177,266h2v1h-2zM183,266h2v1h-2zM110,267h2v1h-2zM116,267h2v1h-2zM169,267h2v1h-2zM105,268h2v1h-2zM118,268h3v1h-3zM166,268h3v1h-3zM174,268h2v1h-2zM180,268h2v1h-2zM107,269h2v1h-2zM113,269h2v1h-2zM121,269h2v1h-2zM164,269h2v1h-2zM172,269h2v1h-2zM115,270h3v1h-3zM123,270h4v1h-4zM161,270h3v1h-3zM169,270h3v1h-3zM177,270h2v1h-2zM110,271h2v1h-2zM118,271h2v1h-2zM127,271h4v1h-4zM156,271h5v1h-5zM167,271h2v1h-2zM175,271h2v1h-2zM112,272h2v1h-2zM120,272h3v1h-3zM131,272h6v1h-6zM150,272h6v1h-6zM165,272h2v1h-2zM173,272h2v1h-2zM114,273h2v1h-2zM123,273h3v1h-3zM137,273h13v1h-13zM161,273h4v1h-4zM171,273h2v1h-2zM116,274h3v1h-3zM126,274h4v1h-4zM157,274h4v1h-4zM168,274h3v1h-3zM119,275h2v1h-2zM130,275h7v1h-7zM150,275h7v1h-7zM166,275h2v1h-2zM121,276h4v1h-4zM137,276h13v1h-13zM162,276h4v1h-4zM125,277h4v1h-4zM158,277h4v1h-4zM129,278h4v1h-4zM154,278h4v1h-4zM133,279h21v1h-21zM88,280h112v1h-112zM91,283h105v1h-105zM94,286h99v1h-99zM94,333h99v1h-99zM91,336h105v1h-105zM88,339h112v1h-112zM133,340h21v1h-21zM129,341h4v1h-4zM154,341h4v1h-4zM125,342h4v1h-4zM158,342h4v1h-4zM121,343h4v1h-4zM137,343h13v1h-13zM162,343h4v1h-4zM119,344h2v1h-2zM130,344h7v1h-7zM150,344h7v1h-7zM166,344h2v1h-2zM116,345h3v1h-3zM126,345h4v1h-4zM157,345h4v1h-4zM168,345h3v1h-3zM114,346h2v1h-2zM123,346h3v1h-3zM137,346h13v1h-13zM161,346h4v1h-4zM171,346h2v1h-2zM112,347h2v1h-2zM120,347h3v1h-3zM131,347h6v1h-6zM150,347h6v1h-6zM165,347h2v1h-2zM173,347h2v1h-2zM110,348h2v1h-2zM118,348h2v1h-2zM127,348h4v1h-4zM156,348h5v1h-5zM167,348h2v1h-2zM175,348h2v1h-2zM115,349h3v1h-3zM123,349h4v1h-4zM161,349h3v1h-3zM169,349h3v1h-3zM177,349h2v1h-2zM107,350h2v1h-2zM113,350h2v1h-2zM121,350h2v1h-2zM164,350h2v1h-2zM172,350h2v1h-2zM105,351h2v1h-2zM118,351h3v1h-3zM166,351h3v1h-3zM174,351h2v1h-2zM180,351h2v1h-2zM110,352h2v1h-2zM116,352h2v1h-2zM169,352h2v1h-2zM102,353h2v1h-2zM108,353h2v1h-2zM114,353h2v1h-2zM171,353h2v1h-2zM177,353h2v1h-2zM183,353h2v1h-2zM112,354h2v1h-2zM173,354h2v1h-2zM105,355h2v1h-2zM180,355h2v1h-2zM109,356h2v1h-2zM176,356h2v1h-2zM178,357h2v1h-2zM96,358h2v1h-2zM106,358h2v1h-2zM184,358h2v1h-2zM189,358h2v1h-2zM100,359h2v1h-2zM101,362h2v1h-2zM184,362h2v1h-2zM234,378h268v1h-268zM237,381h269v1h-269zM240,384h269v1h-269zM101,455h2v1h-2zM184,455h2v1h-2zM100,458h2v1h-2zM96,459h2v1h-2zM106,459h2v1h-2zM184,459h2v1h-2zM189,459h2v1h-2zM178,460h2v1h-2zM104,461h2v1h-2zM109,461h2v1h-2zM176,461h2v1h-2zM180,462h2v1h-2zM112,463h2v1h-2zM173,463h2v1h-2zM102,464h2v1h-2zM108,464h2v1h-2zM114,464h2v1h-2zM171,464h2v1h-2zM177,464h2v1h-2zM183,464h2v1h-2zM110,465h2v1h-2zM116,465h2v1h-2zM169,465h2v1h-2zM105,466h2v1h-2zM118,466h3v1h-3zM166,466h3v1h-3zM174,466h2v1h-2zM180,466h2v1h-2zM107,467h2v1h-2zM113,467h2v1h-2zM121,467h2v1h-2zM164,467h2v1h-2zM172,467h2v1h-2zM115,468h3v1h-3zM123,468h4v1h-4zM161,468h3v1h-3zM169,468h3v1h-3zM177,468h2v1h-2zM110,469h2v1h-2zM118,469h2v1h-2zM127,469h4v1h-4zM156,469h5v1h-5zM167,469h2v1h-2zM175,469h2v1h-2zM112,470h2v1h-2zM120,470h3v1h-3zM131,470h6v1h-6zM150,470h6v1h-6zM165,470h2v1h-2zM173,470h2v1h-2zM114,471h2v1h-2zM123,471h3v1h-3zM137,471h13v1h-13zM161,471h4v1h-4zM171,471h2v1h-2zM116,472h3v1h-3zM126,472h4v1h-4zM157,472h4v1h-4zM168,472h3v1h-3zM119,473h2v1h-2zM130,473h7v1h-7zM150,473h7v1h-7zM166,473h2v1h-2zM121,474h4v1h-4zM137,474h13v1h-13zM162,474h4v1h-4zM125,475h4v1h-4zM158,475h4v1h-4zM129,476h4v1h-4zM154,476h4v1h-4zM133,477h21v1h-21zM59,481h176v1h-176zM55,484h183v1h-183zM52,487h189v1h-189z"/>
<rect x="583.0" y="11.0" width="3" height="560" rx="1.5" fill="#c6c6c6"/>
<rect x="583.0" y="563.0" width="3" height="26" rx="1.5" fill="#2f86f5"/>
<circle cx="584.4" cy="561.5" r="7.6" fill="#fff" stroke="#c2c2c2" stroke-width="0.8"/>
<text x="571.5" y="608.5" font-family="Liberation Sans, sans-serif" font-size="10.4" letter-spacing="1.45" fill="#111">0.80</text>
</svg></div>
<div id="btabs">
 <div style="left:0;width:41px;border-left:none">3D</div>
 <div style="left:41px;width:39.8px">2D</div>
 <div style="left:80.8px;width:69.2px">Preview</div>
 <div class="sel" style="left:150px;width:64.8px">Layers</div>
</div>

<div class="lbl" style="right:288px;top:111.5px">Print settings:</div>
<div class="lbl" style="right:288px;top:140.5px">Filament:</div>
<div class="lbl" style="right:288px;top:169.5px">Printer:</div>
<div class="combo" style="top:107px"><span class="cic"><svg width="16" height="16" viewBox="0 0 16 16"><path d="M15.11,6.87 L15.11,9.13 L13.06,9.21 L12.43,10.72 L13.82,12.23 L12.23,13.82 L10.72,12.43 L9.21,13.06 L9.13,15.11 L6.87,15.11 L6.79,13.06 L5.28,12.43 L3.77,13.82 L2.18,12.23 L3.57,10.72 L2.94,9.21 L0.89,9.13 L0.89,6.87 L2.94,6.79 L3.57,5.28 L2.18,3.77 L3.77,2.18 L5.28,3.57 L6.79,2.94 L6.87,0.89 L9.13,0.89 L9.21,2.94 L10.72,3.57 L12.23,2.18 L13.82,3.77 L12.43,5.28 L13.06,6.79Z M5.80,8.00 a2.20,2.20 0 1,0 4.40,0 a2.20,2.20 0 1,0 -4.40,0Z" fill="#d2d2d2" stroke="#8c8c8c" stroke-width="0.6" fill-rule="evenodd" stroke-linejoin="round"/></svg></span>Rebel 0.2 (modified)</div>
<div class="combo" style="top:136px"><span class="cic" style="background:#868200"></span>Rebel PLA</div>
<div class="combo" style="top:165px"><span class="cic"><svg width="16" height="16" viewBox="0 0 16 16"><path d="M4,6 V3.4 Q4,2.4 5,2.4 H11 Q12,2.4 12,3.4 V6" fill="#f2f2f2" stroke="#7a7a7a" stroke-width="0.8"/><rect x="0.8" y="5.6" width="14.4" height="8" rx="2.2" fill="#e4e4e4" stroke="#6a6a6a" stroke-width="0.8"/><rect x="3" y="8.6" width="10" height="4.6" fill="#fafafa" stroke="#777" stroke-width="0.7"/><path d="M3.4,12.4h9.2" stroke="#555" stroke-width="1.2"/><path d="M3.4,10.4h9.2" stroke="#b0b0b0" stroke-width="0.6"/></svg></span>Rebel II 0.4 S13</div>
<div class="cbtn" style="top:107.3px"><svg width="19" height="19" viewBox="0 0 19 19"><path d="M6.2,7.8 L9.4,10.8 L12.6,7.8" fill="none" stroke="#333" stroke-width="1.4" stroke-linecap="round" stroke-linejoin="round"/></svg></div>
<div class="cbtn" style="top:136.3px"><svg width="19" height="19" viewBox="0 0 19 19"><path d="M6.2,7.8 L9.4,10.8 L12.6,7.8" fill="none" stroke="#333" stroke-width="1.4" stroke-linecap="round" stroke-linejoin="round"/></svg></div>
<div class="cbtn" style="top:165.3px"><svg width="19" height="19" viewBox="0 0 19 19"><path d="M6.2,7.8 L9.4,10.8 L12.6,7.8" fill="none" stroke="#333" stroke-width="1.4" stroke-linecap="round" stroke-linejoin="round"/></svg></div>
<div class="btn" style="left:742.6px;width:108.8px"><span class="bic"><svg width="16" height="16" viewBox="0 0 16 16"><path d="M0.4,4.8 L7,1.6 L15.7,4.6 L15.7,10.6 L9.5,15.4 L0.5,11.2Z" fill="#ececec" stroke="#b4b4b4" stroke-width="0.8" stroke-linejoin="round"/>
<path d="M0.4,4.8 L7,1.6 L15.7,4.6 L9.5,8.6Z" fill="#f8f8f8"/>
<path d="M9.5,8.6 L15.7,4.6 L15.7,10.6 L9.5,15.4Z" fill="#d8d8d8"/>
<path d="M0.4,4.8 L9.5,8.6 L15.7,4.6 M9.5,8.6V15.4" fill="none" stroke="#c8c8c8" stroke-width="0.5"/>
<g fill="#fdfdfd" stroke="#c0c0c0" stroke-width="0.6"><path d="M5.2,1.6 a2.1,1.2 0 0 1 4.2,0 v1 a2.1,1.2 0 0 1 -4.2,0z"/><path d="M2.2,3.8 a2.1,1.2 0 0 1 4.2,0 v1 a2.1,1.2 0 0 1 -4.2,0z"/><path d="M9.4,3.4 a2.1,1.2 0 0 1 4.2,0 v1 a2.1,1.2 0 0 1 -4.2,0z"/><path d="M6.2,5.6 a2.1,1.2 0 0 1 4.2,0 v1 a2.1,1.2 0 0 1 -4.2,0z"/></g><path d="M8.2,10.4h3.6v-2l4,3.6l-4,3.6v-2h-3.6z" fill="#6fbf4f" stroke="#3f8f2f" stroke-width="0.7" stroke-linejoin="round"/></svg></span>Export STL...</div>
<div class="btn" style="left:856.6px;width:131px"><span class="bic"><svg width="16" height="16" viewBox="0 0 16 16"><path d="M15.11,6.87 L15.11,9.13 L13.06,9.21 L12.43,10.72 L13.82,12.23 L12.23,13.82 L10.72,12.43 L9.21,13.06 L9.13,15.11 L6.87,15.11 L6.79,13.06 L5.28,12.43 L3.77,13.82 L2.18,12.23 L3.57,10.72 L2.94,9.21 L0.89,9.13 L0.89,6.87 L2.94,6.79 L3.57,5.28 L2.18,3.77 L3.77,2.18 L5.28,3.57 L6.79,2.94 L6.87,0.89 L9.13,0.89 L9.21,2.94 L10.72,3.57 L12.23,2.18 L13.82,3.77 L12.43,5.28 L13.06,6.79Z M5.80,8.00 a2.20,2.20 0 1,0 4.40,0 a2.20,2.20 0 1,0 -4.40,0Z" fill="#c0c0c0" stroke="#909090" stroke-width="0.6" fill-rule="evenodd" stroke-linejoin="round"/><path d="M8.2,10.4h3.6v-2l4,3.6l-4,3.6v-2h-3.6z" fill="#6fbf4f" stroke="#3f8f2f" stroke-width="0.7" stroke-linejoin="round"/></svg></span>Export G-code...</div>
<div id="list">
 <div id="lhead"></div>
 <div class="lh" style="left:6px">Name</div>
 <div class="lh" style="left:151px">Copies</div>
 <div class="lh" style="left:203px">Scale</div>
 <div class="lsep" style="left:146px"></div><div class="lsep" style="left:191px"></div><div class="lsep" style="left:242px"></div>
 <div id="lrow"></div>
 <div class="lr" style="left:2px">sonic_box.stl</div>
 <div class="lr" style="left:162px">1</div>
 <div class="lr" style="left:200px;top:21px;font-size:10.2px;letter-spacing:-0.2px">100%</div>
</div>
<div class="lbl" style="left:653px;top:669px;font-size:11.5px">Info</div>
<div id="info"></div>
<div class="lbl" style="left:653px;top:690px">Size:</div>
<div class="lbl" style="left:653px;top:709px">Facets:</div>
<div class="lbl" style="left:653px;top:728px">Manifold:</div>
<div class="lbl" style="left:818px;top:690px">Volume:</div>
<div class="lbl" style="left:818px;top:709px">Materials:</div>

<div id="status"></div>
<div id="redge"></div><svg width="1004" height="8" viewBox="0 776 1004 8" style="position:absolute;left:0;top:776px"><path d="M0,778.6 A5.4,5.4 0 0 0 5.4,784 L0,784Z" fill="#000"/><path d="M1003,779 A5,5 0 0 1 998,784 L1004,784 L1004,779Z" fill="#a6a6a6"/></svg>
</div>
</body></html>
